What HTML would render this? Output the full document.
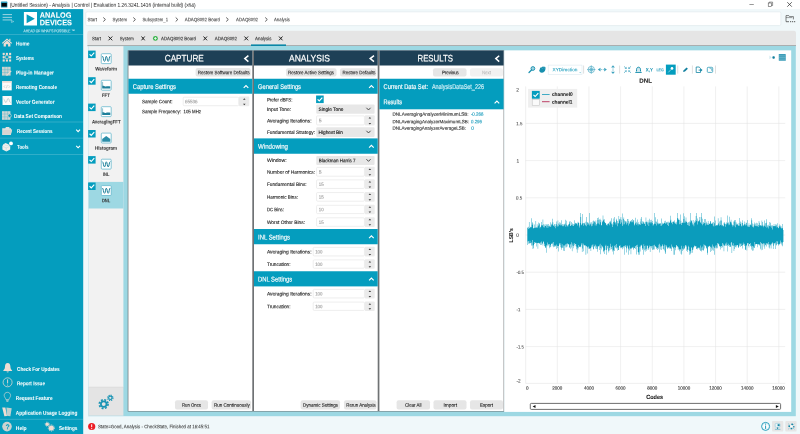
<!DOCTYPE html>
<html lang="en"><head><meta charset="utf-8"><title>Analysis | Control | Evaluation</title>
<style>
html,body{margin:0;padding:0;background:#f0f8fa}
body{width:800px;height:434px;position:relative;overflow:hidden;background:#f0f8fa;font-family:"Liberation Sans",sans-serif}
#app{position:absolute;left:0;top:0;width:800px;height:434px;overflow:hidden}
#app>div{position:absolute}
#app>svg{position:absolute;left:0;top:0;will-change:transform}
#app text{font-family:"Liberation Sans",sans-serif;text-rendering:geometricPrecision;white-space:pre}
</style></head>
<body><div id="app">

<svg width="800" height="434" viewBox="0 0 800 434">
<rect x="0.00" y="0.00" width="800.00" height="9.10" fill="#fff"/>
<rect x="0.90" y="1.50" width="6.50" height="6.00" rx="0.6" fill="#2a9cbc"/>
<rect x="1.50" y="3.00" width="5.30" height="3.60" fill="#05080c"/>
<path d="M749.4 4.5H753.8" stroke="#333" stroke-width=".5"/>
<rect x="768.2" y="3" width="3.4" height="3.4" fill="none" stroke="#333" stroke-width=".5"/><path d="M769.2 3V2.1H772.6V5.5H771.6" fill="none" stroke="#333" stroke-width=".5"/>
<path d="M787.3 2.2L791.8 6.7M791.8 2.2L787.3 6.7" stroke="#333" stroke-width=".75"/>
<rect x="0.00" y="9.10" width="83.20" height="424.90" fill="#049dbe"/>
<g stroke="#b8dfe9" stroke-width=".85" fill="none"><path d="M2.6 14.6H12M2.6 17.35H12M2.6 19.95H12"/></g><path d="M11.4 20.6L13.9 21.5L11.4 22.5Z" fill="none" stroke="#a9d8e4" stroke-width=".55"/>
<rect x="23.90" y="12.00" width="13.10" height="13.50" fill="#fff"/>
<path d="M26.6 14.3L34.8 18.75L26.6 23.2Z" fill="#049dbe"/>
<rect x="0.00" y="34.30" width="83.00" height="0.60" fill="#4fb9d1"/>
<rect x="0.00" y="121.70" width="83.00" height="0.60" fill="#4fb9d1"/>
<rect x="0.00" y="137.80" width="83.00" height="0.60" fill="#4fb9d1"/>
<rect x="0.00" y="154.00" width="83.00" height="0.60" fill="#4fb9d1"/>
<rect x="0.00" y="418.90" width="83.00" height="0.60" fill="#4fb9d1"/>
<g fill="#f0ddd3"><path d="M7 38.4L1.9 43L2.7 43.8L7 39.9L11.3 43.8L12.1 43Z"/><path d="M3.6 43.4L7 40.5L10.4 43.4V46.6H8.1V44.2H5.9V46.6H3.6Z"/><rect x="9.3" y="38.8" width="1.1" height="2.2"/></g>
<g fill="#f0ddd3"><rect x="2.65" y="52.85" width="2.1" height="2.1"/><rect x="5.85" y="52.85" width="2.1" height="2.1"/><rect x="9.05" y="52.85" width="2.1" height="2.1"/><rect x="2.65" y="56.15" width="2.1" height="2.1"/><rect x="9.05" y="56.15" width="2.1" height="2.1"/><rect x="2.65" y="59.45" width="2.1" height="2.1"/><rect x="5.85" y="59.45" width="2.1" height="2.1"/><rect x="9.05" y="59.45" width="2.1" height="2.1"/></g><rect x="5.5" y="55.8" width="2.8" height="2.8" fill="none" stroke="#f0ddd3" stroke-width=".55"/><path d="M3.7 55V56.1M10.1 55V56.1M3.7 58.3V59.4M10.1 58.3V59.4M6.9 55V55.8M6.9 58.6V59.4" stroke="#f0ddd3" stroke-width=".4"/>
<g><rect x="2" y="66.8" width="8.6" height="8.8" fill="#f0ddd3" opacity=".85"/><path d="M2 69.7H10.6M2 72.6H10.6M4.9 66.8V75.6M7.8 66.8V75.6" stroke="#049dbe" stroke-width=".35" opacity=".7"/><path d="M6.2 75.2L10.8 70.4L11.6 71.2L7 76Z" fill="#f0ddd3"/></g>
<rect x="2.1" y="81.2" width="9.6" height="9.2" fill="#fdfaf9"/><rect x="2.1" y="81.2" width="9.6" height="1.5" fill="#ecd9d0"/><path d="M5.2 85.3L4 86.6L5.2 87.9M8.6 85.3L9.8 86.6L8.6 87.9M7.4 84.9L6.4 88.3" stroke="#9aa" stroke-width=".4" fill="none"/>
<rect x="2.5" y="96" width="9.2" height="9" fill="#fdfaf9"/><path d="M3.6 99C4.6 99 4.9 102.6 5.9 102.6S7.2 98.4 8.2 98.4S9.4 102.6 10.6 102.6" stroke="#8aa" stroke-width=".45" fill="none"/>
<g><rect x="2" y="111.2" width="8.4" height="8.6" fill="#eadfd9" opacity=".88"/><path d="M2 114H10.4M2 116.9H10.4M4.8 111.2V119.8M7.6 111.2V119.8" stroke="#049dbe" stroke-width=".35" opacity=".7"/><circle cx="9.6" cy="115.7" r="1.7" fill="#049dbe" stroke="#f0ddd3" stroke-width=".6"/></g>
<path d="M2.2 128.2H5.2L6 127H9.4V128.2H11V129.4H12.2L10.8 134.9H2.2Z" fill="#ece6e2" opacity=".95"/><path d="M3.4 129.8H12L10.7 134.7H2.3Z" fill="#d9d4d1"/>
<g fill="#f4efec"><path d="M5.6 143L8.8 144.4L10.2 146.6V149.4L6.4 151.6L2.4 149.6V146L3.4 144.2Z"/><circle cx="11" cy="143.4" r="1.9" fill="#fff"/></g><path d="M2.8 146.4L6.2 147.9L9.9 146.4M6.2 147.9V151.2M4.2 144.6L6.6 145.7L8.8 144.8" stroke="#049dbe" stroke-width=".3" fill="none" opacity=".45"/>
<path d="M76.2 129.6L78.1 131.6L80 129.6" stroke="#fff" stroke-width="1.1" fill="none"/>
<path d="M76.2 145.8L78.1 147.8L80 145.8" stroke="#fff" stroke-width="1.1" fill="none"/>
<path d="M7.7 362.9C9.6 362.9 10.4 364.6 10.4 366.6C10.4 368.8 11.3 369.6 12.1 370.4V371H3.3V370.4C4.1 369.6 5 368.8 5 366.6C5 364.6 5.8 362.9 7.7 362.9Z" fill="#f0ddd3"/><path d="M6.6 371.5H8.8C8.8 372.7 6.6 372.7 6.6 371.5Z" fill="#f0ddd3"/>
<circle cx="7.6" cy="382.3" r="4.5" fill="none" stroke="#f0ddd3" stroke-width=".7"/><path d="M7.6 379.4V383.4" stroke="#f0ddd3" stroke-width=".9"/><circle cx="7.6" cy="385" r=".55" fill="#f0ddd3"/>
<path d="M7.4 392.3C9.4 392.3 10.6 393.8 10.6 395.4C10.6 397.2 9.1 398 8.9 399.6H5.9C5.7 398 4.2 397.2 4.2 395.4C4.2 393.8 5.4 392.3 7.4 392.3Z" fill="none" stroke="#f0ddd3" stroke-width=".6"/><path d="M6.1 400.4H8.7M6.4 401.5H8.4" stroke="#f0ddd3" stroke-width=".6"/>
<g fill="#f0ddd3"><path d="M2.2 407.6L5.4 407.4L7 416L4.4 416.2Z"/><path d="M6.4 407.5L11.7 408.3L10.4 416.2L6.9 415.8Z" opacity=".8"/></g>
<circle cx="7" cy="426.6" r="4.8" fill="#f0ddd3" opacity=".85"/>
<g fill="#f0ddd3"><circle cx="51.3" cy="428" r="2.6"/><circle cx="47.2" cy="424.2" r="1.7"/></g><g stroke="#f0ddd3" stroke-width="1" stroke-dasharray=".9 1.15" fill="none"><circle cx="51.3" cy="428" r="3.1"/></g><g stroke="#f0ddd3" stroke-width=".8" stroke-dasharray=".7 .87" fill="none"><circle cx="47.2" cy="424.2" r="2.1"/></g>
<rect x="85.75" y="11.85" width="695.10" height="13.70" rx="1.4" fill="#fff" stroke="#dfe9ec" stroke-width="0.7"/>
<path d="M103.3 17.5L105.4 19.5L103.3 21.5" stroke="#333" stroke-width=".8" fill="none"/>
<path d="M133.3 17.5L135.4 19.5L133.3 21.5" stroke="#333" stroke-width=".8" fill="none"/>
<path d="M175.7 17.5L177.8 19.5L175.7 21.5" stroke="#333" stroke-width=".8" fill="none"/>
<path d="M226.2 17.5L228.3 19.5L226.2 21.5" stroke="#333" stroke-width=".8" fill="none"/>
<path d="M265.2 17.5L267.3 19.5L265.2 21.5" stroke="#333" stroke-width=".8" fill="none"/>
<path d="M786 21.6V15.6H788.8L789.6 16.6H793.4V19.4" stroke="#333" stroke-width=".6" fill="none"/><path d="M786 17.6H792.2" stroke="#333" stroke-width=".45"/><path d="M786 21.7H789" stroke="#333" stroke-width=".7"/><path d="M790.1 21.7H795.3" stroke="#333" stroke-width=".9" stroke-dasharray="1.1 .9"/>
<rect x="87.40" y="30.70" width="708.60" height="9.30" rx="2.0" fill="#e5e5e5"/>
<rect x="87.40" y="34.00" width="708.60" height="11.80" fill="#e5e5e5"/>
<rect x="87.40" y="45.30" width="708.60" height="0.85" fill="#8f9496"/>
<rect x="251.00" y="44.40" width="35.00" height="1.60" fill="#0a86a6"/>
<path d="M108.50 36.5L112.25 40.3M112.25 36.5L108.50 40.3" stroke="#222" stroke-width="1"/>
<path d="M141.50 36.5L144.70 40.3M144.70 36.5L141.50 40.3" stroke="#222" stroke-width="1"/>
<path d="M203.50 36.5L207.00 40.3M207.00 36.5L203.50 40.3" stroke="#222" stroke-width="1"/>
<path d="M244.40 36.5L248.10 40.3M248.10 36.5L244.40 40.3" stroke="#222" stroke-width="1"/>
<path d="M279.00 36.5L282.50 40.3M282.50 36.5L279.00 40.3" stroke="#222" stroke-width="1"/>
<circle cx="155.4" cy="38.4" r="2.45" fill="#37b34a"/><path d="M154 38.4H156.8M155.4 37V39.8" stroke="#f2fbf3" stroke-width=".85"/>
<rect x="88.00" y="46.00" width="707.80" height="370.20" fill="#9dd8e3"/>
<rect x="88.00" y="46.10" width="0.80" height="369.90" fill="#d2eaf0"/>
<rect x="88.60" y="46.20" width="34.80" height="340.80" fill="#f2f2f2"/>
<rect x="88.60" y="181.90" width="34.80" height="26.60" fill="#9dd8e3"/>
<rect x="88.60" y="387.00" width="34.80" height="28.70" fill="#e4e4e4"/>
<rect x="88.60" y="386.80" width="34.80" height="0.50" fill="#d4d4d4"/>
<rect x="88.10" y="50.60" width="7.50" height="7.50" fill="#049dbe"/><path d="M89.60 54.35L91.25 56.00L94.25 52.62" stroke="#fff" stroke-width="1.1" fill="none"/>
<rect x="101.3" y="53.70" width="9.9" height="9.9" rx=".9" fill="#fff" stroke="#56b0c8" stroke-width=".7"/>
<path d="M102.3 56.10C103.5 56.10 103.3 61.40 104.5 61.40S105.3 56.30 106.3 56.30S107.1 61.40 108.2 61.40S109 56.10 110.3 56.10" stroke="#1d7f9a" stroke-width="1" fill="none"/>
<rect x="88.10" y="77.20" width="7.50" height="7.50" fill="#049dbe"/><path d="M89.60 80.95L91.25 82.60L94.25 79.23" stroke="#fff" stroke-width="1.1" fill="none"/>
<rect x="101.3" y="80.30" width="9.9" height="9.9" rx=".9" fill="#fff" stroke="#56b0c8" stroke-width=".7"/>
<path d="M102.6 81.90V86.30" stroke="#1d7f9a" stroke-width=".5"/><path d="M102.2 88.60V85.90C103.4 85.50 104.4 86.70 105.6 86.50S108.4 85.90 110.3 86.40V88.60Z" fill="#1d7f9a"/>
<rect x="88.10" y="103.60" width="7.50" height="7.50" fill="#049dbe"/><path d="M89.60 107.35L91.25 109.00L94.25 105.62" stroke="#fff" stroke-width="1.1" fill="none"/>
<rect x="101.3" y="106.70" width="9.9" height="9.9" rx=".9" fill="#fff" stroke="#56b0c8" stroke-width=".7"/>
<path d="M102.6 108.30V112.70" stroke="#1d7f9a" stroke-width=".5"/><path d="M102.2 115.00V112.30C103.4 111.90 104.4 113.10 105.6 112.90S108.4 112.30 110.3 112.80V115.00Z" fill="#1d7f9a"/>
<rect x="88.10" y="130.00" width="7.50" height="7.50" fill="#049dbe"/><path d="M89.60 133.75L91.25 135.40L94.25 132.03" stroke="#fff" stroke-width="1.1" fill="none"/>
<rect x="101.3" y="133.10" width="9.9" height="9.9" rx=".9" fill="#fff" stroke="#56b0c8" stroke-width=".7"/>
<path d="M102.2 141.70V139.10L106.2 135.90L110.3 139.10V141.70Z" fill="#2a8da8"/>
<rect x="88.10" y="156.10" width="7.50" height="7.50" fill="#049dbe"/><path d="M89.60 159.85L91.25 161.50L94.25 158.12" stroke="#fff" stroke-width="1.1" fill="none"/>
<rect x="101.3" y="159.20" width="9.9" height="9.9" rx=".9" fill="#fff" stroke="#56b0c8" stroke-width=".7"/>
<path d="M102.3 161.60C103.5 161.60 103.3 166.90 104.5 166.90S105.3 161.80 106.3 161.80S107.1 166.90 108.2 166.90S109 161.60 110.3 161.60" stroke="#1d7f9a" stroke-width="1" fill="none"/>
<rect x="88.10" y="182.50" width="7.50" height="7.50" fill="#049dbe"/><path d="M89.60 186.25L91.25 187.90L94.25 184.53" stroke="#fff" stroke-width="1.1" fill="none"/>
<rect x="101.3" y="185.60" width="9.9" height="9.9" rx=".9" fill="#fff" stroke="#56b0c8" stroke-width=".7"/>
<path d="M102.3 188.00C103.5 188.00 103.3 193.30 104.5 193.30S105.3 188.20 106.3 188.20S107.1 193.30 108.2 193.30S109 188.00 110.3 188.00" stroke="#1d7f9a" stroke-width="1" fill="none"/>
<g fill="#1a94b4"><circle cx="103.7" cy="404.1" r="3.7"/><circle cx="110.3" cy="397.8" r="2.25"/></g><g fill="none" stroke="#1a94b4"><circle cx="103.7" cy="404.1" r="4.35" stroke-width="1.7" stroke-dasharray="1.95 1.466"/><circle cx="110.3" cy="397.8" r="2.65" stroke-width="1.15" stroke-dasharray="1.15 .931"/></g><circle cx="103.7" cy="404.1" r="1.95" fill="#e4e4e4"/><circle cx="110.3" cy="397.8" r="1.15" fill="#e4e4e4"/>
<rect x="127.70" y="50.40" width="376.60" height="361.10" fill="#6f7274"/>
<rect x="128.40" y="50.40" width="123.90" height="360.60" fill="#fff"/>
<rect x="128.40" y="50.40" width="123.90" height="15.10" fill="#1e4056"/>
<path d="M248.4 55.7L244.8 58.6L248.4 61.6" stroke="#fff" stroke-width="1.5" fill="none"/>
<rect x="254.00" y="50.40" width="123.70" height="360.60" fill="#fff"/>
<rect x="254.00" y="50.40" width="123.70" height="15.10" fill="#1e4056"/>
<path d="M374.0 55.7L370.2 58.6L374.0 61.6" stroke="#fff" stroke-width="1.5" fill="none"/>
<rect x="379.40" y="50.40" width="124.20" height="360.60" fill="#fff"/>
<rect x="379.40" y="50.40" width="124.20" height="15.10" fill="#1e4056"/>
<path d="M499.2 55.7L495.8 58.6L499.2 61.6" stroke="#fff" stroke-width="1.5" fill="none"/>
<rect x="195.60" y="68.00" width="55.10" height="8.60" rx="2.0" fill="#e6e6e6"/>
<rect x="128.40" y="78.75" width="123.90" height="15.00" fill="#049dbe"/>
<path d="M243.7 87.8L246.0 85.5L248.3 87.8" stroke="#fff" stroke-width="1.15" fill="none"/>
<rect x="239.00" y="96.60" width="10.30" height="9.70" rx="1.0" fill="#ebebeb"/>
<path d="M243.00 99.75L244.30 98.25L245.60 99.75ZM243.00 103.65L244.30 105.15L245.60 103.65Z" fill="#3c3c3c"/>
<rect x="183.20" y="97.20" width="55.50" height="8.50" rx="1.0" fill="#fff" stroke="#e2e2e2" stroke-width="0.6"/>
<rect x="175.00" y="400.25" width="33.00" height="9.25" rx="2.0" fill="#e6e6e6"/>
<rect x="211.60" y="400.25" width="39.40" height="9.25" rx="2.0" fill="#e6e6e6"/>
<rect x="286.00" y="68.20" width="50.50" height="8.40" rx="2.0" fill="#e6e6e6"/>
<rect x="340.00" y="68.20" width="36.30" height="8.40" rx="2.0" fill="#e6e6e6"/>
<rect x="254.00" y="78.75" width="123.70" height="15.00" fill="#049dbe"/>
<path d="M369.1 87.8L371.4 85.5L373.7 87.8" stroke="#fff" stroke-width="1.15" fill="none"/>
<rect x="316.10" y="95.50" width="7.60" height="7.60" fill="#049dbe"/><path d="M317.62 99.30L319.29 100.97L322.33 97.55" stroke="#fff" stroke-width="1.15" fill="none"/>
<rect x="316.25" y="104.40" width="58.35" height="9.35" rx="1.2" fill="#e7e7e7"/>
<path d="M366.40 107.78L368.50 109.98L370.60 107.78" stroke="#333" stroke-width=".85" fill="none"/>
<rect x="364.75" y="115.30" width="9.95" height="10.25" rx="1.0" fill="#ebebeb"/>
<path d="M368.57 118.45L369.88 116.95L371.18 118.45ZM368.57 122.90L369.88 124.40L371.18 122.90Z" fill="#3c3c3c"/>
<rect x="316.55" y="115.90" width="47.90" height="9.05" rx="1.0" fill="#fff" stroke="#e2e2e2" stroke-width="0.6"/>
<rect x="316.25" y="127.25" width="58.35" height="9.65" rx="1.2" fill="#e7e7e7"/>
<path d="M366.40 130.77L368.50 132.97L370.60 130.77" stroke="#333" stroke-width=".85" fill="none"/>
<rect x="254.00" y="138.40" width="123.70" height="15.35" fill="#049dbe"/>
<path d="M369.1 147.6L371.4 145.3L373.7 147.6" stroke="#fff" stroke-width="1.15" fill="none"/>
<rect x="316.25" y="155.90" width="58.35" height="9.10" rx="1.2" fill="#e7e7e7"/>
<path d="M366.40 159.15L368.50 161.35L370.60 159.15" stroke="#333" stroke-width=".85" fill="none"/>
<rect x="364.75" y="166.80" width="9.95" height="10.00" rx="1.0" fill="#ebebeb"/>
<path d="M368.57 169.95L369.88 168.45L371.18 169.95ZM368.57 174.15L369.88 175.65L371.18 174.15Z" fill="#3c3c3c"/>
<rect x="316.55" y="167.40" width="47.90" height="8.80" rx="1.0" fill="#fff" stroke="#e2e2e2" stroke-width="0.6"/>
<rect x="364.75" y="179.30" width="9.95" height="9.75" rx="1.0" fill="#ebebeb"/>
<path d="M368.57 182.45L369.88 180.95L371.18 182.45ZM368.57 186.40L369.88 187.90L371.18 186.40Z" fill="#3c3c3c"/>
<rect x="316.55" y="179.90" width="47.90" height="8.55" rx="1.0" fill="#fff" stroke="#e2e2e2" stroke-width="0.6"/>
<rect x="364.75" y="191.95" width="9.95" height="9.85" rx="1.0" fill="#ebebeb"/>
<path d="M368.57 195.10L369.88 193.60L371.18 195.10ZM368.57 199.15L369.88 200.65L371.18 199.15Z" fill="#3c3c3c"/>
<rect x="316.55" y="192.55" width="47.90" height="8.65" rx="1.0" fill="#fff" stroke="#e2e2e2" stroke-width="0.6"/>
<rect x="364.75" y="204.70" width="9.95" height="9.50" rx="1.0" fill="#ebebeb"/>
<path d="M368.57 207.85L369.88 206.35L371.18 207.85ZM368.57 211.55L369.88 213.05L371.18 211.55Z" fill="#3c3c3c"/>
<rect x="316.55" y="205.30" width="47.90" height="8.30" rx="1.0" fill="#fff" stroke="#e2e2e2" stroke-width="0.6"/>
<rect x="364.75" y="217.20" width="9.95" height="9.70" rx="1.0" fill="#ebebeb"/>
<path d="M368.57 220.35L369.88 218.85L371.18 220.35ZM368.57 224.25L369.88 225.75L371.18 224.25Z" fill="#3c3c3c"/>
<rect x="316.55" y="217.80" width="47.90" height="8.50" rx="1.0" fill="#fff" stroke="#e2e2e2" stroke-width="0.6"/>
<rect x="254.00" y="229.00" width="123.70" height="15.25" fill="#049dbe"/>
<path d="M369.1 238.1L371.4 235.8L373.7 238.1" stroke="#fff" stroke-width="1.15" fill="none"/>
<rect x="254.00" y="271.25" width="123.70" height="15.15" fill="#049dbe"/>
<path d="M369.1 280.3L371.4 278.0L373.7 280.3" stroke="#fff" stroke-width="1.15" fill="none"/>
<rect x="364.75" y="246.80" width="9.95" height="9.75" rx="1.0" fill="#ebebeb"/>
<path d="M368.57 249.95L369.88 248.45L371.18 249.95ZM368.57 253.90L369.88 255.40L371.18 253.90Z" fill="#3c3c3c"/>
<rect x="313.20" y="247.40" width="51.25" height="8.55" rx="1.0" fill="#fff" stroke="#e2e2e2" stroke-width="0.6"/>
<rect x="364.75" y="259.30" width="9.95" height="9.50" rx="1.0" fill="#ebebeb"/>
<path d="M368.57 262.45L369.88 260.95L371.18 262.45ZM368.57 266.15L369.88 267.65L371.18 266.15Z" fill="#3c3c3c"/>
<rect x="313.20" y="259.90" width="51.25" height="8.30" rx="1.0" fill="#fff" stroke="#e2e2e2" stroke-width="0.6"/>
<rect x="364.75" y="288.80" width="9.95" height="9.75" rx="1.0" fill="#ebebeb"/>
<path d="M368.57 291.95L369.88 290.45L371.18 291.95ZM368.57 295.90L369.88 297.40L371.18 295.90Z" fill="#3c3c3c"/>
<rect x="313.20" y="289.40" width="51.25" height="8.55" rx="1.0" fill="#fff" stroke="#e2e2e2" stroke-width="0.6"/>
<rect x="364.75" y="301.50" width="9.95" height="9.50" rx="1.0" fill="#ebebeb"/>
<path d="M368.57 304.65L369.88 303.15L371.18 304.65ZM368.57 308.35L369.88 309.85L371.18 308.35Z" fill="#3c3c3c"/>
<rect x="313.20" y="302.10" width="51.25" height="8.30" rx="1.0" fill="#fff" stroke="#e2e2e2" stroke-width="0.6"/>
<rect x="300.60" y="400.25" width="39.40" height="9.25" rx="2.0" fill="#e6e6e6"/>
<rect x="344.00" y="400.25" width="32.50" height="9.25" rx="2.0" fill="#e6e6e6"/>
<rect x="433.00" y="68.20" width="33.50" height="8.40" rx="2.0" fill="#e6e6e6"/>
<rect x="470.00" y="68.20" width="33.00" height="8.40" rx="2.0" fill="#f1f1f1"/>
<rect x="379.40" y="78.75" width="124.20" height="30.55" fill="#049dbe"/>
<path d="M494.6 103.3L496.9 101L499.2 103.3" stroke="#fff" stroke-width="1.15" fill="none"/>
<rect x="396.60" y="400.25" width="33.40" height="9.35" rx="2.0" fill="#e6e6e6"/>
<rect x="433.50" y="400.25" width="33.00" height="9.35" rx="2.0" fill="#e6e6e6"/>
<rect x="470.00" y="400.25" width="33.00" height="9.35" rx="2.0" fill="#e6e6e6"/>
<rect x="504.20" y="50.35" width="287.00" height="361.55" fill="#fff"/>
<path d="M525.65 86.4V383.4M557.30 86.4V383.4M588.95 86.4V383.4M620.60 86.4V383.4M652.25 86.4V383.4M683.90 86.4V383.4M715.55 86.4V383.4M747.20 86.4V383.4M778.85 86.4V383.4M525.6 123.40H785.2M525.6 160.60H785.2M525.6 197.80H785.2M525.6 235.00H785.2M525.6 272.20H785.2M525.6 309.40H785.2M525.6 346.60H785.2M525.6 383.4H785.2" stroke="#e3e3e3" stroke-width=".55" fill="none"/>
<path d="M527.30 227.8H527.72L527.72 227.4H528.13L528.13 226.7H528.55L528.55 228.9H528.97L528.97 221.9H529.39L529.39 228.3H529.80L529.80 228.1H530.22L530.22 227.0H530.64L530.64 226.7H531.05L531.05 218.3H531.47L531.47 227.3H531.89L531.89 225.1H532.31L532.31 222.3H532.72L532.72 223.4H533.14L533.14 228.3H533.56L533.56 228.2H533.97L533.97 227.9H534.39L534.39 224.4H534.81L534.81 227.5H535.22L535.22 227.8H535.64L535.64 221.1H536.06L536.06 227.3H536.48L536.48 227.8H536.89L536.89 224.3H537.31L537.31 227.8H537.73L537.73 226.4H538.14L538.14 225.4H538.56L538.56 222.5H538.98L538.98 224.3H539.40L539.40 222.9H539.81L539.81 228.2H540.23L540.23 226.7H540.65L540.65 227.1H541.06L541.06 225.2H541.48L541.48 222.0H541.90L541.90 225.7H542.32L542.32 225.1H542.73L542.73 219.5H543.15L543.15 227.2H543.57L543.57 224.3H543.98L543.98 225.4H544.40L544.40 227.6H544.82L544.82 223.9H545.24L545.24 226.0H545.65L545.65 225.7H546.07L546.07 224.6H546.49L546.49 227.4H546.90L546.90 223.9H547.32L547.32 225.5H547.74L547.74 228.0H548.16L548.16 224.0H548.57L548.57 226.3H548.99L548.99 226.6H549.41L549.41 225.4H549.82L549.82 226.6H550.24L550.24 222.2H550.66L550.66 226.9H551.07L551.07 223.8H551.49L551.49 225.3H551.91L551.91 224.4H552.33L552.33 218.7H552.74L552.74 222.2H553.16L553.16 225.9H553.58L553.58 225.2H553.99L553.99 226.8H554.41L554.41 224.3H554.83L554.83 223.9H555.25L555.25 228.3H555.66L555.66 226.0H556.08L556.08 224.3H556.50L556.50 221.5H556.91L556.91 226.8H557.33L557.33 225.5H557.75L557.75 220.5H558.17L558.17 223.5H558.58L558.58 226.3H559.00L559.00 224.7H559.42L559.42 222.2H559.83L559.83 224.6H560.25L560.25 222.7H560.67L560.67 225.6H561.09L561.09 224.7H561.50L561.50 220.3H561.92L561.92 226.2H562.34L562.34 224.0H562.75L562.75 225.7H563.17L563.17 226.2H563.59L563.59 224.3H564.00L564.00 224.1H564.42L564.42 225.2H564.84L564.84 223.6H565.26L565.26 219.7H565.67L565.67 226.7H566.09L566.09 224.8H566.51L566.51 220.7H566.92L566.92 226.2H567.34L567.34 225.3H567.76L567.76 226.6H568.18L568.18 224.4H568.59L568.59 224.4H569.01L569.01 223.8H569.43L569.43 221.8H569.84L569.84 221.0H570.26L570.26 226.0H570.68L570.68 225.8H571.10L571.10 222.0H571.51L571.51 225.0H571.93L571.93 223.3H572.35L572.35 224.4H572.76L572.76 226.0H573.18L573.18 224.1H573.60L573.60 226.0H574.02L574.02 220.2H574.43L574.43 224.5H574.85L574.85 224.2H575.27L575.27 223.0H575.68L575.68 222.7H576.10L576.10 224.1H576.52L576.52 222.9H576.94L576.94 223.6H577.35L577.35 225.4H577.77L577.77 221.8H578.19L578.19 222.9H578.60L578.60 222.6H579.02L579.02 227.6H579.44L579.44 225.4H579.85L579.85 223.0H580.27L580.27 213.0H580.69L580.69 217.1H581.11L581.11 225.2H581.52L581.52 224.5H581.94L581.94 223.5H582.36L582.36 214.1H582.77L582.77 223.2H583.19L583.19 225.7H583.61L583.61 223.0H584.03L584.03 223.5H584.44L584.44 222.7H584.86L584.86 224.7H585.28L585.28 225.6H585.69L585.69 221.8H586.11L586.11 226.2H586.53L586.53 217.0H586.95L586.95 221.9H587.36L587.36 222.8H587.78L587.78 225.1H588.20L588.20 223.7H588.61L588.61 222.8H589.03L589.03 213.0H589.45L589.45 225.6H589.87L589.87 224.0H590.28L590.28 222.6H590.70L590.70 224.6H591.12L591.12 226.3H591.53L591.53 222.3H591.95L591.95 225.7H592.37L592.37 223.8H592.78L592.78 221.2H593.20L593.20 220.5H593.62L593.62 223.4H594.04L594.04 221.9H594.45L594.45 221.0H594.87L594.87 225.4H595.29L595.29 222.4H595.70L595.70 220.6H596.12L596.12 225.5H596.54L596.54 224.0H596.96L596.96 223.5H597.37L597.37 218.1H597.79L597.79 220.1H598.21L598.21 217.5H598.62L598.62 223.4H599.04L599.04 224.4H599.46L599.46 219.5H599.88L599.88 218.8H600.29L600.29 222.2H600.71L600.71 219.9H601.13L601.13 225.2H601.54L601.54 225.2H601.96L601.96 221.3H602.38L602.38 222.2H602.80L602.80 215.5H603.21L603.21 220.6H603.63L603.63 219.4H604.05L604.05 219.2H604.46L604.46 222.1H604.88L604.88 222.7H605.30L605.30 222.9H605.71L605.71 223.4H606.13L606.13 224.7H606.55L606.55 225.2H606.97L606.97 225.6H607.38L607.38 223.7H607.80L607.80 224.1H608.22L608.22 223.2H608.63L608.63 223.5H609.05L609.05 221.7H609.47L609.47 225.3H609.89L609.89 221.8H610.30L610.30 220.8H610.72L610.72 222.8H611.14L611.14 224.2H611.55L611.55 218.3H611.97L611.97 223.4H612.39L612.39 227.1H612.81L612.81 224.8H613.22L613.22 222.0H613.64L613.64 218.4H614.06L614.06 217.1H614.47L614.47 221.6H614.89L614.89 223.1H615.31L615.31 222.1H615.73L615.73 224.6H616.14L616.14 218.8H616.56L616.56 220.2H616.98L616.98 226.2H617.39L617.39 221.0H617.81L617.81 223.1H618.23L618.23 223.4H618.65L618.65 216.1H619.06L619.06 218.9H619.48L619.48 220.5H619.90L619.90 218.7H620.31L620.31 224.1H620.73L620.73 217.0H621.15L621.15 219.7H621.56L621.56 222.4H621.98L621.98 213.5H622.40L622.40 225.9H622.82L622.82 224.6H623.23L623.23 218.9H623.65L623.65 217.5H624.07L624.07 224.3H624.48L624.48 220.2H624.90L624.90 221.0H625.32L625.32 221.4H625.74L625.74 222.8H626.15L626.15 224.4H626.57L626.57 221.5H626.99L626.99 219.1H627.40L627.40 223.3H627.82L627.82 219.0H628.24L628.24 225.6H628.66L628.66 220.9H629.07L629.07 222.8H629.49L629.49 223.9H629.91L629.91 221.6H630.32L630.32 221.6H630.74L630.74 220.8H631.16L631.16 222.3H631.58L631.58 220.0H631.99L631.99 219.0H632.41L632.41 221.7H632.83L632.83 222.6H633.24L633.24 220.4H633.66L633.66 220.1H634.08L634.08 224.6H634.49L634.49 225.4H634.91L634.91 223.4H635.33L635.33 217.7H635.75L635.75 222.7H636.16L636.16 221.8H636.58L636.58 224.7H637.00L637.00 223.5H637.41L637.41 219.5H637.83L637.83 225.6H638.25L638.25 222.3H638.67L638.67 224.1H639.08L639.08 224.2H639.50L639.50 224.4H639.92L639.92 221.4H640.33L640.33 224.9H640.75L640.75 218.8H641.17L641.17 217.1H641.59L641.59 223.5H642.00L642.00 224.0H642.42L642.42 221.2H642.84L642.84 223.6H643.25L643.25 221.4H643.67L643.67 222.2H644.09L644.09 223.7H644.51L644.51 223.7H644.92L644.92 222.1H645.34L645.34 225.9H645.76L645.76 217.5H646.17L646.17 221.4H646.59L646.59 222.3H647.01L647.01 222.3H647.43L647.43 224.5H647.84L647.84 220.2H648.26L648.26 222.5H648.68L648.68 225.9H649.09L649.09 218.8H649.51L649.51 222.5H649.93L649.93 220.0H650.34L650.34 222.2H650.76L650.76 223.6H651.18L651.18 222.3H651.60L651.60 219.7H652.01L652.01 221.0H652.43L652.43 223.0H652.85L652.85 225.8H653.26L653.26 224.7H653.68L653.68 224.0H654.10L654.10 223.6H654.52L654.52 213.0H654.93L654.93 223.9H655.35L655.35 217.3H655.77L655.77 221.6H656.18L656.18 225.5H656.60L656.60 221.8H657.02L657.02 219.3H657.44L657.44 223.3H657.85L657.85 224.2H658.27L658.27 222.7H658.69L658.69 224.2H659.10L659.10 223.2H659.52L659.52 223.8H659.94L659.94 223.7H660.36L660.36 223.1H660.77L660.77 226.1H661.19L661.19 218.4H661.61L661.61 225.4H662.02L662.02 224.5H662.44L662.44 222.7H662.86L662.86 223.7H663.27L663.27 224.1H663.69L663.69 222.9H664.11L664.11 223.1H664.53L664.53 221.2H664.94L664.94 223.4H665.36L665.36 220.7H665.78L665.78 223.8H666.19L666.19 222.8H666.61L666.61 222.1H667.03L667.03 222.2H667.45L667.45 224.9H667.86L667.86 221.5H668.28L668.28 225.9H668.70L668.70 222.6H669.11L669.11 222.2H669.53L669.53 223.0H669.95L669.95 220.7H670.37L670.37 215.8H670.78L670.78 219.7H671.20L671.20 222.5H671.62L671.62 222.7H672.03L672.03 221.9H672.45L672.45 224.2H672.87L672.87 221.2H673.29L673.29 221.9H673.70L673.70 221.4H674.12L674.12 222.8H674.54L674.54 220.3H674.95L674.95 224.1H675.37L675.37 222.6H675.79L675.79 223.5H676.21L676.21 221.7H676.62L676.62 224.5H677.04L677.04 213.0H677.46L677.46 218.0H677.87L677.87 219.2H678.29L678.29 220.0H678.71L678.71 218.5H679.12L679.12 220.1H679.54L679.54 224.3H679.96L679.96 223.8H680.38L680.38 214.4H680.79L680.79 220.7H681.21L681.21 225.1H681.63L681.63 223.1H682.04L682.04 222.8H682.46L682.46 222.5H682.88L682.88 223.1H683.30L683.30 213.3H683.71L683.71 219.0H684.13L684.13 216.3H684.55L684.55 222.8H684.96L684.96 220.8H685.38L685.38 222.5H685.80L685.80 217.5H686.22L686.22 221.8H686.63L686.63 221.8H687.05L687.05 225.0H687.47L687.47 223.1H687.88L687.88 222.1H688.30L688.30 225.6H688.72L688.72 222.6H689.14L689.14 226.1H689.55L689.55 221.5H689.97L689.97 222.4H690.39L690.39 213.0H690.80L690.80 220.2H691.22L691.22 221.2H691.64L691.64 220.6H692.05L692.05 222.7H692.47L692.47 224.6H692.89L692.89 219.9H693.31L693.31 224.5H693.72L693.72 226.2H694.14L694.14 221.6H694.56L694.56 223.0H694.97L694.97 222.3H695.39L695.39 220.3H695.81L695.81 216.1H696.23L696.23 213.0H696.64L696.64 220.9H697.06L697.06 218.6H697.48L697.48 224.6H697.89L697.89 220.8H698.31L698.31 221.4H698.73L698.73 221.2H699.15L699.15 216.9H699.56L699.56 220.3H699.98L699.98 222.8H700.40L700.40 222.2H700.81L700.81 216.9H701.23L701.23 213.0H701.65L701.65 223.8H702.07L702.07 218.8H702.48L702.48 225.2H702.90L702.90 223.9H703.32L703.32 222.0H703.73L703.73 223.2H704.15L704.15 219.0H704.57L704.57 223.1H704.99L704.99 225.4H705.40L705.40 218.9H705.82L705.82 222.9H706.24L706.24 221.7H706.65L706.65 224.5H707.07L707.07 225.0H707.49L707.49 223.5H707.90L707.90 220.9H708.32L708.32 224.9H708.74L708.74 223.3H709.16L709.16 223.7H709.57L709.57 224.1H709.99L709.99 221.6H710.41L710.41 221.0H710.82L710.82 223.4H711.24L711.24 224.1H711.66L711.66 223.5H712.08L712.08 223.4H712.49L712.49 222.4H712.91L712.91 225.7H713.33L713.33 221.9H713.74L713.74 226.6H714.16L714.16 223.3H714.58L714.58 216.6H715.00L715.00 220.5H715.41L715.41 226.0H715.83L715.83 224.9H716.25L716.25 225.4H716.66L716.66 225.2H717.08L717.08 224.7H717.50L717.50 225.6H717.92L717.92 218.3H718.33L718.33 223.2H718.75L718.75 224.6H719.17L719.17 225.7H719.58L719.58 221.5H720.00L720.00 225.1H720.42L720.42 220.6H720.83L720.83 217.3H721.25L721.25 220.5H721.67L721.67 225.6H722.09L722.09 225.6H722.50L722.50 224.8H722.92L722.92 226.6H723.34L723.34 226.0H723.75L723.75 222.8H724.17L724.17 223.8H724.59L724.59 222.2H725.01L725.01 223.9H725.42L725.42 226.7H725.84L725.84 223.6H726.26L726.26 224.6H726.67L726.67 222.2H727.09L727.09 215.4H727.51L727.51 223.3H727.93L727.93 223.4H728.34L728.34 222.2H728.76L728.76 225.2H729.18L729.18 224.5H729.59L729.59 216.8H730.01L730.01 221.6H730.43L730.43 222.2H730.85L730.85 219.8H731.26L731.26 222.4H731.68L731.68 224.5H732.10L732.10 226.6H732.51L732.51 224.8H732.93L732.93 225.1H733.35L733.35 221.6H733.76L733.76 226.3H734.18L734.18 220.1H734.60L734.60 221.6H735.02L735.02 227.2H735.43L735.43 220.0H735.85L735.85 222.3H736.27L736.27 223.7H736.68L736.68 225.0H737.10L737.10 223.8H737.52L737.52 224.4H737.94L737.94 225.7H738.35L738.35 225.5H738.77L738.77 222.9H739.19L739.19 218.0H739.60L739.60 225.7H740.02L740.02 221.6H740.44L740.44 224.0H740.86L740.86 222.5H741.27L741.27 225.8H741.69L741.69 226.4H742.11L742.11 220.3H742.52L742.52 223.0H742.94L742.94 225.6H743.36L743.36 225.6H743.78L743.78 224.4H744.19L744.19 224.3H744.61L744.61 221.6H745.03L745.03 224.2H745.44L745.44 225.6H745.86L745.86 222.4H746.28L746.28 222.9H746.70L746.70 225.2H747.11L747.11 219.9H747.53L747.53 226.6H747.95L747.95 225.4H748.36L748.36 226.9H748.78L748.78 223.3H749.20L749.20 226.9H749.61L749.61 225.2H750.03L750.03 224.9H750.45L750.45 224.2H750.87L750.87 225.5H751.28L751.28 218.3H751.70L751.70 220.2H752.12L752.12 223.4H752.53L752.53 226.8H752.95L752.95 226.6H753.37L753.37 227.5H753.79L753.79 224.1H754.20L754.20 222.5H754.62L754.62 225.4H755.04L755.04 225.8H755.45L755.45 223.6H755.87L755.87 226.3H756.29L756.29 222.7H756.71L756.71 225.8H757.12L757.12 226.3H757.54L757.54 223.3H757.96L757.96 227.0H758.37L758.37 225.1H758.79L758.79 221.1H759.21L759.21 222.8H759.63L759.63 225.4H760.04L760.04 224.9H760.46L760.46 225.4H760.88L760.88 226.3H761.29L761.29 225.6H761.71L761.71 220.4H762.13L762.13 221.9H762.54L762.54 225.6H762.96L762.96 227.3H763.38L763.38 225.9H763.80L763.80 224.8H764.21L764.21 220.6H764.63L764.63 226.0H765.05L765.05 226.8H765.46L765.46 223.3H765.88L765.88 222.7H766.30L766.30 219.3H766.72L766.72 227.7H767.13L767.13 226.7H767.55L767.55 225.3H767.97L767.97 228.4H768.38L768.38 224.8H768.80L768.80 226.3H769.22L769.22 225.9H769.64L769.64 222.1H770.05L770.05 222.7H770.47L770.47 226.6H770.89L770.89 225.2H771.30L771.30 227.7H771.72L771.72 225.8H772.14L772.14 229.4H772.56L772.56 225.2H772.97L772.97 226.0H773.39L773.39 226.2H773.81L773.81 223.9H774.22L774.22 226.0H774.64L774.64 226.2H775.06L775.06 226.2H775.48L775.48 224.2H775.89L775.89 225.4H776.31L776.31 224.6H776.73L776.73 227.5H777.14L777.14 227.1H777.56L777.56 223.2H777.98L777.98 228.3H778.39L778.39 228.0H778.81L778.81 226.2H779.23L779.23 224.6H779.65L779.65 226.6H780.06L780.06 227.5H780.48L780.48 225.6H780.90L780.90 226.3H781.31L781.31 228.5H781.73L781.73 228.0H782.15L782.15 224.1H782.57L782.57 228.3H782.98L782.98 229.9H783.40L783.40 242.1H782.98L782.98 242.4H782.57L782.57 246.2H782.15L782.15 245.2H781.73L781.73 243.5H781.31L781.31 242.1H780.90L780.90 243.6H780.48L780.48 240.6H780.06L780.06 243.7H779.65L779.65 244.6H779.23L779.23 244.3H778.81L778.81 244.6H778.39L778.39 245.7H777.98L777.98 241.4H777.56L777.56 244.0H777.14L777.14 241.0H776.73L776.73 245.5H776.31L776.31 244.8H775.89L775.89 249.1H775.48L775.48 242.5H775.06L775.06 243.0H774.64L774.64 244.2H774.22L774.22 242.9H773.81L773.81 245.8H773.39L773.39 249.1H772.97L772.97 242.2H772.56L772.56 243.2H772.14L772.14 244.3H771.72L771.72 243.6H771.30L771.30 248.5H770.89L770.89 245.6H770.47L770.47 244.5H770.05L770.05 248.4H769.64L769.64 244.3H769.22L769.22 247.5H768.80L768.80 244.5H768.38L768.38 242.1H767.97L767.97 244.5H767.55L767.55 243.4H767.13L767.13 243.2H766.72L766.72 246.4H766.30L766.30 243.3H765.88L765.88 244.7H765.46L765.46 245.2H765.05L765.05 248.7H764.63L764.63 243.6H764.21L764.21 246.6H763.80L763.80 243.1H763.38L763.38 244.3H762.96L762.96 244.0H762.54L762.54 249.7H762.13L762.13 243.2H761.71L761.71 243.3H761.29L761.29 250.2H760.88L760.88 248.8H760.46L760.46 242.0H760.04L760.04 245.7H759.63L759.63 244.4H759.21L759.21 244.7H758.79L758.79 244.6H758.37L758.37 244.0H757.96L757.96 247.3H757.54L757.54 244.3H757.12L757.12 244.1H756.71L756.71 244.0H756.29L756.29 244.1H755.87L755.87 244.1H755.45L755.45 245.6H755.04L755.04 242.1H754.62L754.62 247.9H754.20L754.20 247.8H753.79L753.79 246.6H753.37L753.37 250.5H752.95L752.95 250.7H752.53L752.53 246.1H752.12L752.12 245.5H751.70L751.70 249.6H751.28L751.28 246.8H750.87L750.87 245.9H750.45L750.45 243.1H750.03L750.03 244.0H749.61L749.61 243.9H749.20L749.20 247.5H748.78L748.78 246.0H748.36L748.36 243.0H747.95L747.95 243.5H747.53L747.53 243.1H747.11L747.11 250.4H746.70L746.70 245.6H746.28L746.28 245.4H745.86L745.86 250.0H745.44L745.44 249.6H745.03L745.03 245.9H744.61L744.61 243.8H744.19L744.19 244.5H743.78L743.78 244.4H743.36L743.36 242.4H742.94L742.94 248.5H742.52L742.52 245.0H742.11L742.11 246.1H741.69L741.69 245.9H741.27L741.27 243.4H740.86L740.86 243.8H740.44L740.44 246.9H740.02L740.02 243.5H739.60L739.60 245.5H739.19L739.19 246.4H738.77L738.77 248.1H738.35L738.35 247.2H737.94L737.94 244.9H737.52L737.52 245.0H737.10L737.10 245.9H736.68L736.68 245.0H736.27L736.27 247.4H735.85L735.85 247.0H735.43L735.43 245.2H735.02L735.02 248.9H734.60L734.60 245.4H734.18L734.18 250.9H733.76L733.76 246.1H733.35L733.35 243.3H732.93L732.93 245.5H732.51L732.51 245.6H732.10L732.10 253.1H731.68L731.68 242.1H731.26L731.26 242.7H730.85L730.85 246.7H730.43L730.43 246.8H730.01L730.01 245.1H729.59L729.59 247.1H729.18L729.18 245.6H728.76L728.76 243.7H728.34L728.34 246.0H727.93L727.93 245.0H727.51L727.51 251.6H727.09L727.09 242.4H726.67L726.67 246.0H726.26L726.26 244.6H725.84L725.84 243.4H725.42L725.42 245.8H725.01L725.01 245.5H724.59L724.59 245.7H724.17L724.17 251.3H723.75L723.75 245.3H723.34L723.34 243.7H722.92L722.92 247.2H722.50L722.50 243.1H722.09L722.09 248.0H721.67L721.67 245.9H721.25L721.25 245.9H720.83L720.83 249.4H720.42L720.42 246.8H720.00L720.00 246.0H719.58L719.58 246.6H719.17L719.17 244.3H718.75L718.75 244.2H718.33L718.33 243.2H717.92L717.92 243.0H717.50L717.50 248.3H717.08L717.08 247.5H716.66L716.66 248.5H716.25L716.25 245.1H715.83L715.83 246.2H715.41L715.41 248.2H715.00L715.00 254.8H714.58L714.58 248.0H714.16L714.16 246.7H713.74L713.74 250.8H713.33L713.33 246.2H712.91L712.91 244.5H712.49L712.49 249.7H712.08L712.08 250.9H711.66L711.66 248.3H711.24L711.24 246.8H710.82L710.82 246.8H710.41L710.41 252.1H709.99L709.99 245.9H709.57L709.57 245.7H709.16L709.16 247.3H708.74L708.74 246.8H708.32L708.32 246.2H707.90L707.90 254.8H707.49L707.49 252.7H707.07L707.07 248.8H706.65L706.65 248.1H706.24L706.24 246.5H705.82L705.82 245.6H705.40L705.40 245.7H704.99L704.99 248.4H704.57L704.57 245.1H704.15L704.15 244.2H703.73L703.73 250.1H703.32L703.32 251.0H702.90L702.90 250.1H702.48L702.48 246.4H702.07L702.07 247.5H701.65L701.65 251.4H701.23L701.23 250.3H700.81L700.81 250.9H700.40L700.40 245.4H699.98L699.98 249.7H699.56L699.56 247.7H699.15L699.15 248.6H698.73L698.73 248.0H698.31L698.31 247.2H697.89L697.89 249.4H697.48L697.48 248.0H697.06L697.06 248.8H696.64L696.64 249.0H696.23L696.23 246.0H695.81L695.81 246.6H695.39L695.39 246.3H694.97L694.97 245.4H694.56L694.56 246.2H694.14L694.14 247.5H693.72L693.72 247.2H693.31L693.31 249.5H692.89L692.89 250.1H692.47L692.47 252.7H692.05L692.05 247.4H691.64L691.64 247.5H691.22L691.22 252.9H690.80L690.80 254.3H690.39L690.39 251.3H689.97L689.97 250.8H689.55L689.55 254.8H689.14L689.14 247.1H688.72L688.72 245.7H688.30L688.30 250.1H687.88L687.88 251.9H687.47L687.47 249.5H687.05L687.05 251.1H686.63L686.63 246.4H686.22L686.22 245.3H685.80L685.80 244.9H685.38L685.38 246.6H684.96L684.96 248.8H684.55L684.55 248.2H684.13L684.13 246.2H683.71L683.71 249.8H683.30L683.30 249.2H682.88L682.88 251.0H682.46L682.46 248.6H682.04L682.04 254.8H681.63L681.63 245.7H681.21L681.21 253.7H680.79L680.79 249.7H680.38L680.38 248.9H679.96L679.96 249.6H679.54L679.54 251.3H679.12L679.12 248.7H678.71L678.71 247.2H678.29L678.29 249.9H677.87L677.87 246.7H677.46L677.46 246.0H677.04L677.04 245.6H676.62L676.62 245.0H676.21L676.21 247.1H675.79L675.79 250.2H675.37L675.37 248.1H674.95L674.95 254.8H674.54L674.54 247.0H674.12L674.12 254.8H673.70L673.70 248.5H673.29L673.29 247.4H672.87L672.87 246.4H672.45L672.45 247.2H672.03L672.03 244.5H671.62L671.62 251.1H671.20L671.20 248.9H670.78L670.78 248.6H670.37L670.37 247.8H669.95L669.95 248.5H669.53L669.53 246.4H669.11L669.11 248.0H668.70L668.70 247.1H668.28L668.28 248.3H667.86L667.86 247.4H667.45L667.45 249.1H667.03L667.03 245.7H666.61L666.61 247.2H666.19L666.19 245.1H665.78L665.78 254.0H665.36L665.36 252.6H664.94L664.94 250.5H664.53L664.53 244.4H664.11L664.11 246.1H663.69L663.69 249.4H663.27L663.27 249.0H662.86L662.86 245.4H662.44L662.44 244.2H662.02L662.02 246.1H661.61L661.61 249.9H661.19L661.19 247.0H660.77L660.77 249.4H660.36L660.36 245.5H659.94L659.94 252.5H659.52L659.52 243.8H659.10L659.10 244.7H658.69L658.69 249.0H658.27L658.27 247.5H657.85L657.85 248.0H657.44L657.44 249.9H657.02L657.02 247.4H656.60L656.60 249.0H656.18L656.18 247.0H655.77L655.77 246.6H655.35L655.35 246.0H654.93L654.93 249.4H654.52L654.52 244.7H654.10L654.10 245.3H653.68L653.68 249.5H653.26L653.26 249.6H652.85L652.85 245.8H652.43L652.43 249.9H652.01L652.01 246.1H651.60L651.60 248.2H651.18L651.18 246.4H650.76L650.76 246.0H650.34L650.34 251.9H649.93L649.93 247.2H649.51L649.51 245.4H649.09L649.09 249.2H648.68L648.68 248.1H648.26L648.26 250.0H647.84L647.84 246.0H647.43L647.43 245.5H647.01L647.01 250.7H646.59L646.59 248.7H646.17L646.17 245.6H645.76L645.76 249.5H645.34L645.34 251.7H644.92L644.92 246.0H644.51L644.51 250.2H644.09L644.09 244.3H643.67L643.67 254.8H643.25L643.25 248.8H642.84L642.84 248.2H642.42L642.42 250.0H642.00L642.00 245.8H641.59L641.59 244.8H641.17L641.17 245.3H640.75L640.75 246.5H640.33L640.33 251.4H639.92L639.92 254.8H639.50L639.50 246.8H639.08L639.08 252.5H638.67L638.67 254.8H638.25L638.25 251.9H637.83L637.83 246.9H637.41L637.41 244.7H637.00L637.00 254.5H636.58L636.58 245.1H636.16L636.16 246.1H635.75L635.75 249.0H635.33L635.33 246.2H634.91L634.91 248.0H634.49L634.49 247.9H634.08L634.08 248.5H633.66L633.66 249.7H633.24L633.24 246.8H632.83L632.83 248.1H632.41L632.41 247.3H631.99L631.99 247.8H631.58L631.58 248.8H631.16L631.16 254.3H630.74L630.74 249.0H630.32L630.32 248.1H629.91L629.91 245.6H629.49L629.49 250.6H629.07L629.07 249.3H628.66L628.66 254.8H628.24L628.24 248.3H627.82L627.82 246.4H627.40L627.40 245.5H626.99L626.99 252.6H626.57L626.57 248.3H626.15L626.15 245.5H625.74L625.74 247.0H625.32L625.32 245.2H624.90L624.90 246.1H624.48L624.48 254.8H624.07L624.07 247.2H623.65L623.65 245.9H623.23L623.23 248.2H622.82L622.82 247.1H622.40L622.40 249.3H621.98L621.98 247.5H621.56L621.56 247.4H621.15L621.15 248.2H620.73L620.73 247.5H620.31L620.31 245.3H619.90L619.90 246.1H619.48L619.48 245.8H619.06L619.06 249.9H618.65L618.65 250.0H618.23L618.23 247.5H617.81L617.81 247.4H617.39L617.39 250.8H616.98L616.98 248.6H616.56L616.56 243.9H616.14L616.14 247.9H615.73L615.73 247.2H615.31L615.31 245.1H614.89L614.89 245.9H614.47L614.47 251.1H614.06L614.06 250.6H613.64L613.64 254.4H613.22L613.22 249.8H612.81L612.81 251.4H612.39L612.39 245.8H611.97L611.97 249.1H611.55L611.55 246.9H611.14L611.14 249.7H610.72L610.72 243.8H610.30L610.30 246.6H609.89L609.89 250.6H609.47L609.47 247.9H609.05L609.05 252.6H608.63L608.63 250.8H608.22L608.22 245.8H607.80L607.80 248.6H607.38L607.38 245.9H606.97L606.97 254.8H606.55L606.55 250.1H606.13L606.13 244.7H605.71L605.71 246.0H605.30L605.30 249.7H604.88L604.88 250.4H604.46L604.46 254.0H604.05L604.05 251.0H603.63L603.63 252.3H603.21L603.21 247.7H602.80L602.80 247.0H602.38L602.38 245.9H601.96L601.96 245.3H601.54L601.54 249.4H601.13L601.13 247.9H600.71L600.71 254.2H600.29L600.29 243.8H599.88L599.88 245.5H599.46L599.46 249.9H599.04L599.04 246.8H598.62L598.62 245.9H598.21L598.21 246.3H597.79L597.79 251.7H597.37L597.37 248.8H596.96L596.96 246.4H596.54L596.54 248.9H596.12L596.12 245.5H595.70L595.70 248.5H595.29L595.29 244.4H594.87L594.87 246.7H594.45L594.45 246.1H594.04L594.04 249.6H593.62L593.62 249.1H593.20L593.20 244.2H592.78L592.78 245.3H592.37L592.37 247.2H591.95L591.95 247.2H591.53L591.53 245.5H591.12L591.12 251.1H590.70L590.70 248.6H590.28L590.28 248.0H589.87L589.87 248.9H589.45L589.45 248.4H589.03L589.03 248.7H588.61L588.61 246.4H588.20L588.20 246.8H587.78L587.78 247.4H587.36L587.36 253.6H586.95L586.95 246.6H586.53L586.53 246.1H586.11L586.11 254.7H585.69L585.69 245.8H585.28L585.28 245.0H584.86L584.86 245.2H584.44L584.44 245.6H584.03L584.03 251.2H583.61L583.61 244.4H583.19L583.19 243.3H582.77L582.77 248.5H582.36L582.36 252.1H581.94L581.94 244.8H581.52L581.52 243.3H581.11L581.11 246.8H580.69L580.69 247.3H580.27L580.27 246.2H579.85L579.85 247.0H579.44L579.44 246.8H579.02L579.02 245.1H578.60L578.60 247.7H578.19L578.19 249.4H577.77L577.77 247.5H577.35L577.35 252.8H576.94L576.94 246.6H576.52L576.52 249.2H576.10L576.10 244.1H575.68L575.68 244.0H575.27L575.27 246.3H574.85L574.85 244.8H574.43L574.43 243.1H574.02L574.02 248.2H573.60L573.60 246.0H573.18L573.18 243.4H572.76L572.76 245.6H572.35L572.35 251.3H571.93L571.93 242.3H571.51L571.51 247.5H571.10L571.10 244.3H570.68L570.68 248.7H570.26L570.26 244.5H569.84L569.84 247.0H569.43L569.43 248.1H569.01L569.01 243.9H568.59L568.59 244.8H568.18L568.18 244.1H567.76L567.76 243.2H567.34L567.34 246.5H566.92L566.92 247.2H566.51L566.51 243.8H566.09L566.09 247.5H565.67L565.67 244.2H565.26L565.26 245.5H564.84L564.84 245.6H564.42L564.42 250.9H564.00L564.00 245.4H563.59L563.59 250.8H563.17L563.17 247.8H562.75L562.75 247.7H562.34L562.34 244.2H561.92L561.92 249.8H561.50L561.50 247.7H561.09L561.09 243.3H560.67L560.67 247.2H560.25L560.25 245.1H559.83L559.83 242.9H559.42L559.42 244.3H559.00L559.00 251.5H558.58L558.58 245.9H558.17L558.17 246.0H557.75L557.75 248.1H557.33L557.33 245.8H556.91L556.91 249.1H556.50L556.50 244.5H556.08L556.08 246.2H555.66L555.66 246.3H555.25L555.25 244.9H554.83L554.83 247.1H554.41L554.41 245.7H553.99L553.99 247.3H553.58L553.58 241.9H553.16L553.16 246.2H552.74L552.74 242.7H552.33L552.33 244.1H551.91L551.91 243.6H551.49L551.49 243.9H551.07L551.07 247.3H550.66L550.66 245.3H550.24L550.24 246.9H549.82L549.82 244.1H549.41L549.41 248.2H548.99L548.99 243.9H548.57L548.57 245.4H548.16L548.16 244.7H547.74L547.74 242.6H547.32L547.32 246.2H546.90L546.90 252.7H546.49L546.49 245.2H546.07L546.07 247.4H545.65L545.65 247.9H545.24L545.24 246.5H544.82L544.82 246.1H544.40L544.40 243.8H543.98L543.98 241.7H543.57L543.57 241.6H543.15L543.15 245.6H542.73L542.73 243.9H542.32L542.32 243.0H541.90L541.90 241.5H541.48L541.48 245.0H541.06L541.06 242.2H540.65L540.65 244.9H540.23L540.23 243.2H539.81L539.81 244.0H539.40L539.40 242.9H538.98L538.98 243.1H538.56L538.56 242.8H538.14L538.14 248.7H537.73L537.73 243.0H537.31L537.31 243.2H536.89L536.89 242.8H536.48L536.48 246.4H536.06L536.06 243.1H535.64L535.64 242.7H535.22L535.22 242.2H534.81L534.81 244.1H534.39L534.39 241.9H533.97L533.97 248.2H533.56L533.56 245.2H533.14L533.14 249.0H532.72L532.72 240.0H532.31L532.31 245.6H531.89L531.89 242.6H531.47L531.47 245.4H531.05L531.05 243.1H530.64L530.64 243.3H530.22L530.22 240.8H529.80L529.80 243.2H529.39L529.39 243.6H528.97L528.97 243.7H528.55L528.55 241.1H528.13L528.13 241.4H527.72L527.72 245.1H527.30Z" fill="#0b9cbc"/>
<rect x="528.1" y="88.9" width="49.1" height="18.7" fill="#efefef"/>
<rect x="531.90" y="90.90" width="7.80" height="7.80" fill="#049dbe"/><path d="M533.46 94.80L535.18 96.52L538.30 93.01" stroke="#fff" stroke-width="1.15" fill="none"/>
<rect x="532.2" y="99.3" width="7.2" height="6.3" fill="#fafafa" stroke="#bdbdbd" stroke-width=".5"/>
<path d="M542 94.5H549.6" stroke="#2ba3be" stroke-width=".9"/><path d="M542 101.7H549.6" stroke="#b5224e" stroke-width=".85"/>
<rect x="530.3" y="403.4" width="250.3" height="6" rx="1" fill="#fff" stroke="#4a4a4a" stroke-width=".8"/><path d="M535.5 404.9V408L532.6 406.45Z" fill="#111"/><path d="M775.9 404.9V408L778.8 406.45Z" fill="#111"/>
<circle cx="532.9" cy="68.5" r="1.9" fill="#9fd3e0" stroke="#178fae" stroke-width=".9"/><path d="M531.5 70L529 72.5" stroke="#178fae" stroke-width="1.2" stroke-linecap="round"/>
<path d="M539.9 69.3C539.7 68 540.9 67 541.8 67.5C542.1 66.5 543.3 66.2 543.9 67C544.5 66.3 545.6 66.7 545.5 67.8C545.6 69.2 545.2 70.8 544.2 71.8C543 72.9 540.9 73 539.9 71.9C539 70.9 539.1 69.8 539.9 69.3Z" fill="#178fae"/><path d="M541.9 67.7L542.6 69M544 67.3L544.3 68.6" stroke="#8fcbdb" stroke-width=".35"/>
<rect x="548.2" y="65.1" width="33.8" height="9.3" fill="#fff" stroke="#dbe9f0" stroke-width=".6"/><path d="M579.3 72.3H581L580.15 73.3Z" fill="#5fb6cc"/>
<path d="M583.6 65.5V73.6" stroke="#c9c9c9" stroke-width=".6"/>
<path d="M619.6 65.5V73.6" stroke="#c9c9c9" stroke-width=".6"/>
<path d="M677.7 65.5V73.6" stroke="#c9c9c9" stroke-width=".6"/>
<path d="M692.4 65.5V73.6" stroke="#c9c9c9" stroke-width=".6"/>
<path d="M715.5 65.5V73.6" stroke="#c9c9c9" stroke-width=".6"/>
<g stroke="#3da2be" fill="none"><circle cx="591.25" cy="69.55" r="3.2" stroke-width=".65"/><circle cx="591.25" cy="69.55" r="1.6" stroke-width=".5" fill="#b5dde8"/><path d="M587 69.55H595.5M591.25 65.3V73.8" stroke-width=".55"/></g>
<path d="M597.8 69.55L600.5 67.7V71.4ZM606.9 69.55L604.2 67.7V71.4Z" fill="#3da2be"/><path d="M600.9 69.55H603.8" stroke="#3da2be" stroke-width=".6" stroke-dasharray="1.1 .7"/>
<path d="M613 65.2L614.9 67.5H611.1ZM613 74L614.9 71.7H611.1Z" fill="#3da2be"/><path d="M613 67.9V71.4" stroke="#3da2be" stroke-width=".7" stroke-dasharray=".7 .5"/>
<path d="M626.75 68.95L624.65 68.55L626.35 66.85Z" fill="#3da2be"/><path d="M625.50 67.70L624.00 66.40" stroke="#3da2be" stroke-width=".7"/><path d="M626.75 70.25L624.65 70.65L626.35 72.35Z" fill="#3da2be"/><path d="M625.50 71.50L624.00 72.80" stroke="#3da2be" stroke-width=".7"/><path d="M628.25 68.95L630.35 68.55L628.65 66.85Z" fill="#3da2be"/><path d="M629.50 67.70L631.00 66.40" stroke="#3da2be" stroke-width=".7"/><path d="M628.25 70.25L630.35 70.65L628.65 72.35Z" fill="#3da2be"/><path d="M629.50 71.50L631.00 72.80" stroke="#3da2be" stroke-width=".7"/>
<path d="M636.5 71.4V69.6C636.5 66.4 640.5 66.4 640.5 69.6V71.4" stroke="#178fae" stroke-width="1" fill="#cfe8ef"/><path d="M635.3 72.4H641.7" stroke="#178fae" stroke-width="1"/>
<rect x="665.9" y="64.6" width="9.8" height="10.1" fill="#049dbe"/><circle cx="672" cy="68.4" r="1.35" fill="#fff"/><path d="M671.1 69.4L668.3 72.4" stroke="#d8eff5" stroke-width=".6"/>
<path d="M683.1 72.1L683.7 70.3L686.6 67.4L687.9 68.7L685 71.6Z" fill="#117f9e"/>
<path d="M696.2 67H699.1L700.5 68.4V72.5H696.2Z" fill="#fff" stroke="#1486a5" stroke-width=".8"/><path d="M698.6 70.1H701.4" stroke="#1486a5" stroke-width=".9"/><path d="M700.9 68.7L702.5 70.1L700.9 71.5Z" fill="#1486a5"/>
<rect x="707.3" y="67.3" width="5.4" height="5.1" rx=".9" fill="none" stroke="#2e9bb8" stroke-width=".8"/><path d="M709.6 68.6H711.6V70.8" stroke="#2e9bb8" stroke-width=".6" fill="none"/>
<path d="M769.4 55.6L771.8 57.4L769.4 59.2Z" fill="#d3eaf1"/><rect x="772.4" y="56.2" width="2.4" height="2.5" rx=".9" fill="#117d9c"/>
<rect x="778.8" y="54.1" width="7" height="6.7" rx=".4" fill="#3d9db9"/><path d="M778.8 55.85H785.8M778.8 57.5H785.8M778.8 59.15H785.8" stroke="#8fcad9" stroke-width=".45"/>
<circle cx="91.7" cy="426.5" r="3.6" fill="#ec1c24"/><path d="M91.7 424.3V427.2" stroke="#fff" stroke-width="1"/><circle cx="91.7" cy="428.6" r=".55" fill="#fff"/>
<circle cx="765.6" cy="426.4" r="4" fill="#fff" stroke="#1f9bba" stroke-width="1"/><circle cx="765.6" cy="426.4" r="3" fill="none" stroke="#bfe3ec" stroke-width=".45"/><path d="M765.6 425.5V428.9" stroke="#1793b3" stroke-width=".95"/><circle cx="765.6" cy="424.1" r=".6" fill="#1793b3"/>
<rect x="772.00" y="420.90" width="11.30" height="10.70" rx="1.0" fill="#e6e6e6"/>
<rect x="785.30" y="420.90" width="11.30" height="10.70" rx="1.0" fill="#e6e6e6"/>
<rect x="775.2" y="423.4" width="4.8" height="3.9" rx="1" fill="#eef6f8" stroke="#7cc3d6" stroke-width=".5"/><rect x="777.6" y="424.2" width="2" height="1.9" fill="#1486a5"/><path d="M777.6 427.4V429" stroke="#1486a5" stroke-width=".9"/><path d="M774.9 429.3H780.4" stroke="#3aa3bf" stroke-width=".6"/>
<g fill="#1486a5"><rect x="791.3" y="423.6" width="1.7" height="1.6"/><rect x="788.4" y="425.4" width="1.7" height="1.6"/><rect x="790.6" y="427.7" width="1.7" height="1.6"/><rect x="793" y="426" width="1.5" height="1.5" opacity=".8"/></g><rect x="790.3" y="425.4" width="2.1" height="2" fill="#fff"/><path d="M788.2 423.7L789.6 425M794.4 423.7L793.2 424.9M788.2 429.2L789.6 427.9M794.4 429.2L793.1 428" stroke="#58b3ca" stroke-width=".6"/>
<g text-rendering="geometricPrecision">
<text x="9.75" y="6.75" transform="rotate(0.04 9.8 6.75)" textLength="185.85" lengthAdjust="spacingAndGlyphs" font-size="5.5" fill="#333" stroke="#333" stroke-width="0.050">(Untitled Session) - Analysis | Control | Evaluation 1.26.3241.1416 (internal build) (x64)</text>
<text x="39.80" y="17.75" transform="rotate(0.04 39.8 17.75)" textLength="31.70" lengthAdjust="spacingAndGlyphs" font-size="7.9" fill="#fff" font-weight="700" stroke="#fff" stroke-width="0.063">ANALOG</text>
<text x="39.80" y="25.25" transform="rotate(0.04 39.8 25.25)" textLength="32.10" lengthAdjust="spacingAndGlyphs" font-size="7.9" fill="#fff" font-weight="700" stroke="#fff" stroke-width="0.063">DEVICES</text>
<text x="23.50" y="32.25" transform="rotate(0.04 23.5 32.25)" textLength="51.20" lengthAdjust="spacingAndGlyphs" font-size="4.0" fill="#c9e9f1" stroke="#c9e9f1" stroke-width="0.088">AHEAD OF WHAT’S POSSIBLE ™</text>
<text x="16.00" y="45.5" transform="rotate(0.04 16.0 45.5)" textLength="13.50" lengthAdjust="spacingAndGlyphs" font-size="5.6" fill="#fff" font-weight="700" stroke="#fff" stroke-width="0.045">Home</text>
<text x="16.00" y="60.0" transform="rotate(0.04 16.0 60.0)" textLength="18.00" lengthAdjust="spacingAndGlyphs" font-size="5.6" fill="#fff" font-weight="700" stroke="#fff" stroke-width="0.045">Systems</text>
<text x="16.00" y="74.5" transform="rotate(0.04 16.0 74.5)" textLength="38.00" lengthAdjust="spacingAndGlyphs" font-size="5.6" fill="#fff" font-weight="700" stroke="#fff" stroke-width="0.045">Plug-in Manager</text>
<text x="16.00" y="89.0" transform="rotate(0.04 16.0 89.0)" textLength="41.00" lengthAdjust="spacingAndGlyphs" font-size="5.6" fill="#fff" font-weight="700" stroke="#fff" stroke-width="0.045">Remoting Console</text>
<text x="16.00" y="103.75" transform="rotate(0.04 16.0 103.75)" textLength="38.50" lengthAdjust="spacingAndGlyphs" font-size="5.6" fill="#fff" font-weight="700" stroke="#fff" stroke-width="0.045">Vector Generator</text>
<text x="14.00" y="118.0" transform="rotate(0.04 14.0 118.0)" textLength="48.00" lengthAdjust="spacingAndGlyphs" font-size="5.6" fill="#fff" font-weight="700" stroke="#fff" stroke-width="0.045">Data Set Comparison</text>
<text x="17.00" y="133.0" transform="rotate(0.04 17.0 133.0)" textLength="35.50" lengthAdjust="spacingAndGlyphs" font-size="5.6" fill="#fff" font-weight="700" stroke="#fff" stroke-width="0.045">Recent Sessions</text>
<text x="17.00" y="148.75" transform="rotate(0.04 17.0 148.75)" textLength="11.50" lengthAdjust="spacingAndGlyphs" font-size="5.6" fill="#fff" font-weight="700" stroke="#fff" stroke-width="0.045">Tools</text>
<text x="17.00" y="371.0" transform="rotate(0.04 17.0 371.0)" textLength="42.70" lengthAdjust="spacingAndGlyphs" font-size="5.6" fill="#fff" font-weight="700" stroke="#fff" stroke-width="0.045">Check For Updates</text>
<text x="17.00" y="385.25" transform="rotate(0.04 17.0 385.25)" textLength="28.00" lengthAdjust="spacingAndGlyphs" font-size="5.6" fill="#fff" font-weight="700" stroke="#fff" stroke-width="0.045">Report Issue</text>
<text x="15.80" y="400.0" transform="rotate(0.04 15.8 400.0)" textLength="36.70" lengthAdjust="spacingAndGlyphs" font-size="5.6" fill="#fff" font-weight="700" stroke="#fff" stroke-width="0.045">Request Feature</text>
<text x="15.80" y="414.75" transform="rotate(0.04 15.8 414.75)" textLength="61.50" lengthAdjust="spacingAndGlyphs" font-size="5.6" fill="#fff" font-weight="700" stroke="#fff" stroke-width="0.045">Application Usage Logging</text>
<text x="15.80" y="430.0" transform="rotate(0.04 15.8 430.0)" textLength="10.80" lengthAdjust="spacingAndGlyphs" font-size="5.6" fill="#fff" font-weight="700" stroke="#fff" stroke-width="0.045">Help</text>
<text x="59.00" y="430.0" transform="rotate(0.04 59.0 430.0)" textLength="18.30" lengthAdjust="spacingAndGlyphs" font-size="5.6" fill="#fff" font-weight="700" stroke="#fff" stroke-width="0.045">Settings</text>
<text x="5.40" y="429.25" transform="rotate(0.04 5.4 429.25)" font-size="7" fill="#049dbe" font-weight="700" stroke="#049dbe" stroke-width="0.056">?</text>
<text x="87.50" y="21.25" transform="rotate(0.04 87.5 21.25)" textLength="9.40" lengthAdjust="spacingAndGlyphs" font-size="5.0" fill="#3a3a3a" stroke="#3a3a3a" stroke-width="0.060">Start</text>
<text x="112.50" y="21.25" transform="rotate(0.04 112.5 21.25)" textLength="14.50" lengthAdjust="spacingAndGlyphs" font-size="5.0" fill="#3a3a3a" stroke="#3a3a3a" stroke-width="0.060">System</text>
<text x="142.50" y="21.25" transform="rotate(0.04 142.5 21.25)" textLength="25.50" lengthAdjust="spacingAndGlyphs" font-size="5.0" fill="#3a3a3a" stroke="#3a3a3a" stroke-width="0.060">Subsystem_1</text>
<text x="184.75" y="21.25" transform="rotate(0.04 184.8 21.25)" textLength="35.25" lengthAdjust="spacingAndGlyphs" font-size="5.0" fill="#3a3a3a" stroke="#3a3a3a" stroke-width="0.060">ADAQ8092 Board</text>
<text x="236.00" y="21.25" transform="rotate(0.04 236.0 21.25)" textLength="22.00" lengthAdjust="spacingAndGlyphs" font-size="5.0" fill="#3a3a3a" stroke="#3a3a3a" stroke-width="0.060">ADAQ8092</text>
<text x="274.00" y="21.25" transform="rotate(0.04 274.0 21.25)" textLength="16.00" lengthAdjust="spacingAndGlyphs" font-size="5.0" fill="#3a3a3a" stroke="#3a3a3a" stroke-width="0.060">Analysis</text>
<text x="91.90" y="40.25" transform="rotate(0.04 91.9 40.25)" textLength="9.10" lengthAdjust="spacingAndGlyphs" font-size="5.0" fill="#2a2a2a" stroke="#2a2a2a" stroke-width="0.080">Start</text>
<text x="119.75" y="40.25" transform="rotate(0.04 119.8 40.25)" textLength="14.00" lengthAdjust="spacingAndGlyphs" font-size="5.0" fill="#2a2a2a" stroke="#2a2a2a" stroke-width="0.080">System</text>
<text x="161.00" y="40.25" transform="rotate(0.04 161.0 40.25)" textLength="35.00" lengthAdjust="spacingAndGlyphs" font-size="5.0" fill="#2a2a2a" stroke="#2a2a2a" stroke-width="0.080">ADAQ8092 Board</text>
<text x="214.75" y="40.25" transform="rotate(0.04 214.8 40.25)" textLength="22.25" lengthAdjust="spacingAndGlyphs" font-size="5.0" fill="#2a2a2a" stroke="#2a2a2a" stroke-width="0.080">ADAQ8092</text>
<text x="255.00" y="40.25" transform="rotate(0.04 255.0 40.25)" textLength="16.50" lengthAdjust="spacingAndGlyphs" font-size="5.0" fill="#2a2a2a" stroke="#2a2a2a" stroke-width="0.080">Analysis</text>
<text x="95.25" y="70.5" transform="rotate(0.04 95.2 70.5)" textLength="21.75" lengthAdjust="spacingAndGlyphs" font-size="5.0" fill="#333" font-weight="700" stroke="#333" stroke-width="0.040">Waveform</text>
<text x="102.00" y="97.0" transform="rotate(0.04 102.0 97.0)" textLength="7.75" lengthAdjust="spacingAndGlyphs" font-size="5.0" fill="#333" font-weight="700" stroke="#333" stroke-width="0.040">FFT</text>
<text x="91.90" y="123.5" transform="rotate(0.04 91.9 123.5)" textLength="28.70" lengthAdjust="spacingAndGlyphs" font-size="5.0" fill="#333" font-weight="700" stroke="#333" stroke-width="0.040">AveragingFFT</text>
<text x="95.00" y="149.75" transform="rotate(0.04 95.0 149.75)" textLength="22.00" lengthAdjust="spacingAndGlyphs" font-size="5.0" fill="#333" font-weight="700" stroke="#333" stroke-width="0.040">Histogram</text>
<text x="103.00" y="176.0" transform="rotate(0.04 103.0 176.0)" textLength="6.40" lengthAdjust="spacingAndGlyphs" font-size="5.0" fill="#333" font-weight="700" stroke="#333" stroke-width="0.040">INL</text>
<text x="101.90" y="202.25" transform="rotate(0.04 101.9 202.25)" textLength="8.35" lengthAdjust="spacingAndGlyphs" font-size="5.0" fill="#333" font-weight="700" stroke="#333" stroke-width="0.040">DNL</text>
<text x="164.75" y="61.5" transform="rotate(0.04 164.8 61.5)" textLength="39.00" lengthAdjust="spacingAndGlyphs" font-size="9.5" fill="#fff" stroke="#fff" stroke-width="0.209">CAPTURE</text>
<text x="289.00" y="61.5" transform="rotate(0.04 289.0 61.5)" textLength="41.00" lengthAdjust="spacingAndGlyphs" font-size="9.5" fill="#fff" stroke="#fff" stroke-width="0.209">ANALYSIS</text>
<text x="417.50" y="61.5" transform="rotate(0.04 417.5 61.5)" textLength="35.50" lengthAdjust="spacingAndGlyphs" font-size="9.5" fill="#fff" stroke="#fff" stroke-width="0.209">RESULTS</text>
<text x="197.75" y="74.25" transform="rotate(0.04 197.8 74.25)" textLength="52.00" lengthAdjust="spacingAndGlyphs" font-size="5.0" fill="#222" stroke="#222" stroke-width="0.110">Restore Software Defaults</text>
<text x="132.75" y="89.0" transform="rotate(0.04 132.8 89.0)" textLength="43.25" lengthAdjust="spacingAndGlyphs" font-size="6.9" fill="#fff" stroke="#fff" stroke-width="0.152">Capture Settings</text>
<text x="141.90" y="103.25" transform="rotate(0.04 141.9 103.25)" textLength="30.60" lengthAdjust="spacingAndGlyphs" font-size="5.0" fill="#1c1c1c" stroke="#1c1c1c" stroke-width="0.110">Sample Count:</text>
<text x="185.00" y="103.25" transform="rotate(0.04 185.0 103.25)" textLength="12.50" lengthAdjust="spacingAndGlyphs" font-size="5.0" fill="#9a9a9a" stroke="#9a9a9a" stroke-width="0.110">65536</text>
<text x="141.90" y="113.25" transform="rotate(0.04 141.9 113.25)" textLength="39.10" lengthAdjust="spacingAndGlyphs" font-size="5.0" fill="#1c1c1c" stroke="#1c1c1c" stroke-width="0.110">Sample Frequency:</text>
<text x="183.50" y="113.25" transform="rotate(0.04 183.5 113.25)" textLength="17.50" lengthAdjust="spacingAndGlyphs" font-size="5.0" fill="#1c1c1c" stroke="#1c1c1c" stroke-width="0.110">105 MHz</text>
<text x="181.90" y="406.75" transform="rotate(0.04 181.9 406.75)" textLength="19.35" lengthAdjust="spacingAndGlyphs" font-size="5.0" fill="#222" stroke="#222" stroke-width="0.110">Run Once</text>
<text x="214.00" y="406.75" transform="rotate(0.04 214.0 406.75)" textLength="35.75" lengthAdjust="spacingAndGlyphs" font-size="5.0" fill="#222" stroke="#222" stroke-width="0.110">Run Continuously</text>
<text x="288.00" y="74.25" transform="rotate(0.04 288.0 74.25)" textLength="46.00" lengthAdjust="spacingAndGlyphs" font-size="5.0" fill="#222" stroke="#222" stroke-width="0.110">Restore Active Settings</text>
<text x="342.50" y="74.25" transform="rotate(0.04 342.5 74.25)" textLength="33.10" lengthAdjust="spacingAndGlyphs" font-size="5.0" fill="#222" stroke="#222" stroke-width="0.110">Restore Defaults</text>
<text x="258.00" y="89.0" transform="rotate(0.04 258.0 89.0)" textLength="43.00" lengthAdjust="spacingAndGlyphs" font-size="6.9" fill="#fff" stroke="#fff" stroke-width="0.152">General Settings</text>
<text x="266.90" y="101.5" transform="rotate(0.04 266.9 101.5)" textLength="25.60" lengthAdjust="spacingAndGlyphs" font-size="5.0" fill="#1c1c1c" stroke="#1c1c1c" stroke-width="0.110">Prefer dBFS:</text>
<text x="266.90" y="111.0" transform="rotate(0.04 266.9 111.0)" textLength="24.35" lengthAdjust="spacingAndGlyphs" font-size="5.0" fill="#1c1c1c" stroke="#1c1c1c" stroke-width="0.110">Input Tone:</text>
<text x="318.50" y="111.0" transform="rotate(0.04 318.5 111.0)" textLength="25.00" lengthAdjust="spacingAndGlyphs" font-size="5.0" fill="#111" stroke="#111" stroke-width="0.110">Single Tone</text>
<text x="266.90" y="122.5" transform="rotate(0.04 266.9 122.5)" textLength="44.70" lengthAdjust="spacingAndGlyphs" font-size="5.0" fill="#1c1c1c" stroke="#1c1c1c" stroke-width="0.110">Averaging Iterations:</text>
<text x="318.80" y="122.25" transform="rotate(0.04 318.8 122.25)" font-size="5.0" fill="#9a9a9a" stroke="#9a9a9a" stroke-width="0.110">5</text>
<text x="266.90" y="134.0" transform="rotate(0.04 266.9 134.0)" textLength="48.10" lengthAdjust="spacingAndGlyphs" font-size="5.0" fill="#1c1c1c" stroke="#1c1c1c" stroke-width="0.110">Fundamental Strategy:</text>
<text x="318.50" y="134.0" transform="rotate(0.04 318.5 134.0)" textLength="24.50" lengthAdjust="spacingAndGlyphs" font-size="5.0" fill="#111" stroke="#111" stroke-width="0.110">Highest Bin</text>
<text x="258.00" y="148.75" transform="rotate(0.04 258.0 148.75)" textLength="30.00" lengthAdjust="spacingAndGlyphs" font-size="6.9" fill="#fff" stroke="#fff" stroke-width="0.152">Windowing</text>
<text x="266.90" y="162.0" transform="rotate(0.04 266.9 162.0)" textLength="19.70" lengthAdjust="spacingAndGlyphs" font-size="5.0" fill="#1c1c1c" stroke="#1c1c1c" stroke-width="0.110">Window:</text>
<text x="318.75" y="162.25" transform="rotate(0.04 318.8 162.25)" textLength="36.75" lengthAdjust="spacingAndGlyphs" font-size="5.0" fill="#111" stroke="#111" stroke-width="0.110">Blackman Harris 7</text>
<text x="266.90" y="173.75" transform="rotate(0.04 266.9 173.75)" textLength="48.10" lengthAdjust="spacingAndGlyphs" font-size="5.0" fill="#1c1c1c" stroke="#1c1c1c" stroke-width="0.110">Number of Harmonics:</text>
<text x="318.80" y="173.75" transform="rotate(0.04 318.8 173.75)" font-size="5.0" fill="#9a9a9a" stroke="#9a9a9a" stroke-width="0.110">5</text>
<text x="266.90" y="186.0" transform="rotate(0.04 266.9 186.0)" textLength="39.70" lengthAdjust="spacingAndGlyphs" font-size="5.0" fill="#1c1c1c" stroke="#1c1c1c" stroke-width="0.110">Fundamental Bins:</text>
<text x="318.80" y="186.0" transform="rotate(0.04 318.8 186.0)" textLength="4.80" lengthAdjust="spacingAndGlyphs" font-size="5.0" fill="#9a9a9a" stroke="#9a9a9a" stroke-width="0.110">15</text>
<text x="266.90" y="198.75" transform="rotate(0.04 266.9 198.75)" textLength="31.10" lengthAdjust="spacingAndGlyphs" font-size="5.0" fill="#1c1c1c" stroke="#1c1c1c" stroke-width="0.110">Harmonic Bins:</text>
<text x="318.80" y="198.75" transform="rotate(0.04 318.8 198.75)" textLength="4.80" lengthAdjust="spacingAndGlyphs" font-size="5.0" fill="#9a9a9a" stroke="#9a9a9a" stroke-width="0.110">15</text>
<text x="266.90" y="211.25" transform="rotate(0.04 266.9 211.25)" textLength="17.10" lengthAdjust="spacingAndGlyphs" font-size="5.0" fill="#1c1c1c" stroke="#1c1c1c" stroke-width="0.110">DC Bins:</text>
<text x="318.80" y="211.25" transform="rotate(0.04 318.8 211.25)" textLength="4.80" lengthAdjust="spacingAndGlyphs" font-size="5.0" fill="#9a9a9a" stroke="#9a9a9a" stroke-width="0.110">10</text>
<text x="266.90" y="224.0" transform="rotate(0.04 266.9 224.0)" textLength="38.10" lengthAdjust="spacingAndGlyphs" font-size="5.0" fill="#1c1c1c" stroke="#1c1c1c" stroke-width="0.110">Worst Other Bins:</text>
<text x="318.80" y="224.0" transform="rotate(0.04 318.8 224.0)" textLength="4.80" lengthAdjust="spacingAndGlyphs" font-size="5.0" fill="#9a9a9a" stroke="#9a9a9a" stroke-width="0.110">15</text>
<text x="258.00" y="239.5" transform="rotate(0.04 258.0 239.5)" textLength="32.00" lengthAdjust="spacingAndGlyphs" font-size="6.9" fill="#fff" stroke="#fff" stroke-width="0.152">INL Settings</text>
<text x="258.00" y="281.5" transform="rotate(0.04 258.0 281.5)" textLength="34.25" lengthAdjust="spacingAndGlyphs" font-size="6.9" fill="#fff" stroke="#fff" stroke-width="0.152">DNL Settings</text>
<text x="266.90" y="253.5" transform="rotate(0.04 266.9 253.5)" textLength="44.70" lengthAdjust="spacingAndGlyphs" font-size="5.0" fill="#1c1c1c" stroke="#1c1c1c" stroke-width="0.110">Averaging Iterations:</text>
<text x="315.20" y="253.5" transform="rotate(0.04 315.2 253.5)" textLength="7.30" lengthAdjust="spacingAndGlyphs" font-size="5.0" fill="#9a9a9a" stroke="#9a9a9a" stroke-width="0.110">100</text>
<text x="266.90" y="266.0" transform="rotate(0.04 266.9 266.0)" textLength="23.70" lengthAdjust="spacingAndGlyphs" font-size="5.0" fill="#1c1c1c" stroke="#1c1c1c" stroke-width="0.110">Truncation:</text>
<text x="315.20" y="266.0" transform="rotate(0.04 315.2 266.0)" textLength="7.30" lengthAdjust="spacingAndGlyphs" font-size="5.0" fill="#9a9a9a" stroke="#9a9a9a" stroke-width="0.110">100</text>
<text x="266.90" y="295.5" transform="rotate(0.04 266.9 295.5)" textLength="44.70" lengthAdjust="spacingAndGlyphs" font-size="5.0" fill="#1c1c1c" stroke="#1c1c1c" stroke-width="0.110">Averaging Iterations:</text>
<text x="315.20" y="295.5" transform="rotate(0.04 315.2 295.5)" textLength="7.30" lengthAdjust="spacingAndGlyphs" font-size="5.0" fill="#9a9a9a" stroke="#9a9a9a" stroke-width="0.110">100</text>
<text x="266.90" y="308.25" transform="rotate(0.04 266.9 308.25)" textLength="23.70" lengthAdjust="spacingAndGlyphs" font-size="5.0" fill="#1c1c1c" stroke="#1c1c1c" stroke-width="0.110">Truncation:</text>
<text x="315.20" y="308.25" transform="rotate(0.04 315.2 308.25)" textLength="7.30" lengthAdjust="spacingAndGlyphs" font-size="5.0" fill="#9a9a9a" stroke="#9a9a9a" stroke-width="0.110">100</text>
<text x="303.00" y="406.75" transform="rotate(0.04 303.0 406.75)" textLength="34.90" lengthAdjust="spacingAndGlyphs" font-size="5.0" fill="#222" stroke="#222" stroke-width="0.110">Dynamic Settings</text>
<text x="346.25" y="406.75" transform="rotate(0.04 346.2 406.75)" textLength="29.35" lengthAdjust="spacingAndGlyphs" font-size="5.0" fill="#222" stroke="#222" stroke-width="0.110">Rerun Analysis</text>
<text x="441.90" y="74.25" transform="rotate(0.04 441.9 74.25)" textLength="16.85" lengthAdjust="spacingAndGlyphs" font-size="5.0" fill="#222" stroke="#222" stroke-width="0.110">Previous</text>
<text x="481.90" y="74.25" transform="rotate(0.04 481.9 74.25)" textLength="9.10" lengthAdjust="spacingAndGlyphs" font-size="5.0" fill="#bdbdbd" stroke="#bdbdbd" stroke-width="0.110">Next</text>
<text x="383.50" y="89.0" transform="rotate(0.04 383.5 89.0)" textLength="44.50" lengthAdjust="spacingAndGlyphs" font-size="6.9" fill="#fff" stroke="#fff" stroke-width="0.152">Current Data Set:</text>
<text x="431.90" y="89.0" transform="rotate(0.04 431.9 89.0)" textLength="52.10" lengthAdjust="spacingAndGlyphs" font-size="6.9" fill="#d3f1f8" stroke="#d3f1f8" stroke-width="0.152">AnalysisDataSet_226</text>
<text x="383.40" y="104.25" transform="rotate(0.04 383.4 104.25)" textLength="18.60" lengthAdjust="spacingAndGlyphs" font-size="6.9" fill="#fff" stroke="#fff" stroke-width="0.152">Results</text>
<text x="392.50" y="115.75" transform="rotate(0.04 392.5 115.75)" textLength="76.10" lengthAdjust="spacingAndGlyphs" font-size="4.8" fill="#2a2a2a" stroke="#2a2a2a" stroke-width="0.106">DNLAveragingAnalyzerMinimumLSB:</text>
<text x="470.90" y="115.75" transform="rotate(0.04 470.9 115.75)" textLength="12.60" lengthAdjust="spacingAndGlyphs" font-size="4.8" fill="#1a9cbc" stroke="#1a9cbc" stroke-width="0.106">-0.266</text>
<text x="392.50" y="123.25" transform="rotate(0.04 392.5 123.25)" textLength="76.50" lengthAdjust="spacingAndGlyphs" font-size="4.8" fill="#2a2a2a" stroke="#2a2a2a" stroke-width="0.106">DNLAveragingAnalyzerMaximumLSB:</text>
<text x="471.00" y="123.25" transform="rotate(0.04 471.0 123.25)" textLength="11.00" lengthAdjust="spacingAndGlyphs" font-size="4.8" fill="#1a9cbc" stroke="#1a9cbc" stroke-width="0.106">0.296</text>
<text x="392.50" y="129.75" transform="rotate(0.04 392.5 129.75)" textLength="73.50" lengthAdjust="spacingAndGlyphs" font-size="4.8" fill="#2a2a2a" stroke="#2a2a2a" stroke-width="0.106">DNLAveragingAnalyzerAverageLSB:</text>
<text x="471.25" y="129.75" transform="rotate(0.04 471.2 129.75)" font-size="4.8" fill="#1a9cbc" stroke="#1a9cbc" stroke-width="0.106">0</text>
<text x="405.00" y="406.75" transform="rotate(0.04 405.0 406.75)" textLength="16.50" lengthAdjust="spacingAndGlyphs" font-size="5.0" fill="#222" stroke="#222" stroke-width="0.110">Clear All</text>
<text x="443.40" y="406.75" transform="rotate(0.04 443.4 406.75)" textLength="13.60" lengthAdjust="spacingAndGlyphs" font-size="5.0" fill="#222" stroke="#222" stroke-width="0.110">Import</text>
<text x="480.00" y="406.75" transform="rotate(0.04 480.0 406.75)" textLength="13.00" lengthAdjust="spacingAndGlyphs" font-size="5.0" fill="#222" stroke="#222" stroke-width="0.110">Export</text>
<text x="551.90" y="96.0" transform="rotate(0.04 551.9 96.0)" textLength="20.85" lengthAdjust="spacingAndGlyphs" font-size="5.3" fill="#1a1a1a" font-weight="700" stroke="#1a1a1a" stroke-width="0.042">channel0</text>
<text x="551.90" y="103.75" transform="rotate(0.04 551.9 103.75)" textLength="20.50" lengthAdjust="spacingAndGlyphs" font-size="5.3" fill="#1a1a1a" font-weight="700" stroke="#1a1a1a" stroke-width="0.042">channel1</text>
<text x="516.30" y="91.5" transform="rotate(0.04 516.3 91.5)" font-size="4.8" fill="#3a3a3a" stroke="#3a3a3a" stroke-width="0.060">2</text>
<text x="516.30" y="125.25" transform="rotate(0.04 516.3 125.25)" textLength="6.10" lengthAdjust="spacingAndGlyphs" font-size="4.8" fill="#3a3a3a" stroke="#3a3a3a" stroke-width="0.060">1.5</text>
<text x="516.50" y="162.5" transform="rotate(0.04 516.5 162.5)" font-size="4.8" fill="#3a3a3a" stroke="#3a3a3a" stroke-width="0.060">1</text>
<text x="516.00" y="199.5" transform="rotate(0.04 516.0 199.5)" textLength="6.20" lengthAdjust="spacingAndGlyphs" font-size="4.8" fill="#3a3a3a" stroke="#3a3a3a" stroke-width="0.060">0.5</text>
<text x="516.25" y="236.75" transform="rotate(0.04 516.2 236.75)" font-size="4.8" fill="#3a3a3a" stroke="#3a3a3a" stroke-width="0.060">0</text>
<text x="516.60" y="274.0" transform="rotate(0.04 516.6 274.0)" textLength="7.30" lengthAdjust="spacingAndGlyphs" font-size="4.8" fill="#3a3a3a" stroke="#3a3a3a" stroke-width="0.060">-0.5</text>
<text x="516.60" y="311.25" transform="rotate(0.04 516.6 311.25)" textLength="3.80" lengthAdjust="spacingAndGlyphs" font-size="4.8" fill="#3a3a3a" stroke="#3a3a3a" stroke-width="0.060">-1</text>
<text x="516.60" y="348.5" transform="rotate(0.04 516.6 348.5)" textLength="7.30" lengthAdjust="spacingAndGlyphs" font-size="4.8" fill="#3a3a3a" stroke="#3a3a3a" stroke-width="0.060">-1.5</text>
<text x="516.50" y="382.5" transform="rotate(0.04 516.5 382.5)" textLength="4.10" lengthAdjust="spacingAndGlyphs" font-size="4.8" fill="#3a3a3a" stroke="#3a3a3a" stroke-width="0.060">-2</text>
<text x="525.90" y="389.5" transform="rotate(0.04 525.9 389.5)" font-size="4.6" fill="#333" stroke="#333" stroke-width="0.101">0</text>
<text x="552.30" y="389.5" transform="rotate(0.04 552.3 389.5)" textLength="10.00" lengthAdjust="spacingAndGlyphs" font-size="4.6" fill="#333" stroke="#333" stroke-width="0.101">2000</text>
<text x="583.95" y="389.5" transform="rotate(0.04 583.9 389.5)" textLength="10.00" lengthAdjust="spacingAndGlyphs" font-size="4.6" fill="#333" stroke="#333" stroke-width="0.101">4000</text>
<text x="615.60" y="389.5" transform="rotate(0.04 615.6 389.5)" textLength="10.00" lengthAdjust="spacingAndGlyphs" font-size="4.6" fill="#333" stroke="#333" stroke-width="0.101">6000</text>
<text x="647.25" y="389.5" transform="rotate(0.04 647.2 389.5)" textLength="10.00" lengthAdjust="spacingAndGlyphs" font-size="4.6" fill="#333" stroke="#333" stroke-width="0.101">8000</text>
<text x="677.65" y="389.5" transform="rotate(0.04 677.6 389.5)" textLength="12.50" lengthAdjust="spacingAndGlyphs" font-size="4.6" fill="#333" stroke="#333" stroke-width="0.101">10000</text>
<text x="709.30" y="389.5" transform="rotate(0.04 709.3 389.5)" textLength="12.50" lengthAdjust="spacingAndGlyphs" font-size="4.6" fill="#333" stroke="#333" stroke-width="0.101">12000</text>
<text x="740.95" y="389.5" transform="rotate(0.04 740.9 389.5)" textLength="12.50" lengthAdjust="spacingAndGlyphs" font-size="4.6" fill="#333" stroke="#333" stroke-width="0.101">14000</text>
<text x="772.30" y="389.5" transform="rotate(0.04 772.3 389.5)" textLength="12.50" lengthAdjust="spacingAndGlyphs" font-size="4.6" fill="#333" stroke="#333" stroke-width="0.101">16000</text>
<text x="639.30" y="82.75" transform="rotate(0.04 639.3 82.75)" textLength="12.70" lengthAdjust="spacingAndGlyphs" font-size="6.3" fill="#1a1a1a" font-weight="700" stroke="#1a1a1a" stroke-width="0.050">DNL</text>
<text x="646.25" y="399.0" transform="rotate(0.04 646.2 399.0)" textLength="16.75" lengthAdjust="spacingAndGlyphs" font-size="6.0" fill="#111" font-weight="700" stroke="#111" stroke-width="0.048">Codes</text>
<text transform="translate(513 242.40) rotate(-90)" x="0" y="0" textLength="14.20" lengthAdjust="spacingAndGlyphs" font-size="5.6" fill="#111" font-weight="700" stroke="#111" stroke-width="0.045">LSB's</text>
<text x="552.50" y="71.25" transform="rotate(0.04 552.5 71.25)" textLength="25.00" lengthAdjust="spacingAndGlyphs" font-size="4.7" fill="#2aa3c1" stroke="#2aa3c1" stroke-width="0.103">XYDirection</text>
<text x="645.70" y="71.5" transform="rotate(0.04 645.7 71.5)" textLength="7.20" lengthAdjust="spacingAndGlyphs" font-size="5.2" fill="#1b93b3" font-weight="700" stroke="#1b93b3" stroke-width="0.042">X,Y</text>
<text x="656.40" y="71.25" transform="rotate(0.04 656.4 71.25)" textLength="7.30" lengthAdjust="spacingAndGlyphs" font-size="4.1" fill="#4eaec8" font-weight="700" stroke="#4eaec8" stroke-width="0.120">LEG</text>
<text x="97.90" y="428.25" transform="rotate(0.04 97.9 428.25)" textLength="111.50" lengthAdjust="spacingAndGlyphs" font-size="5.0" fill="#303030" stroke="#303030" stroke-width="0.050">State=Good, Analysis - CheckState, Finished at 16:45:51</text>
</g></svg>
</div></body></html>
